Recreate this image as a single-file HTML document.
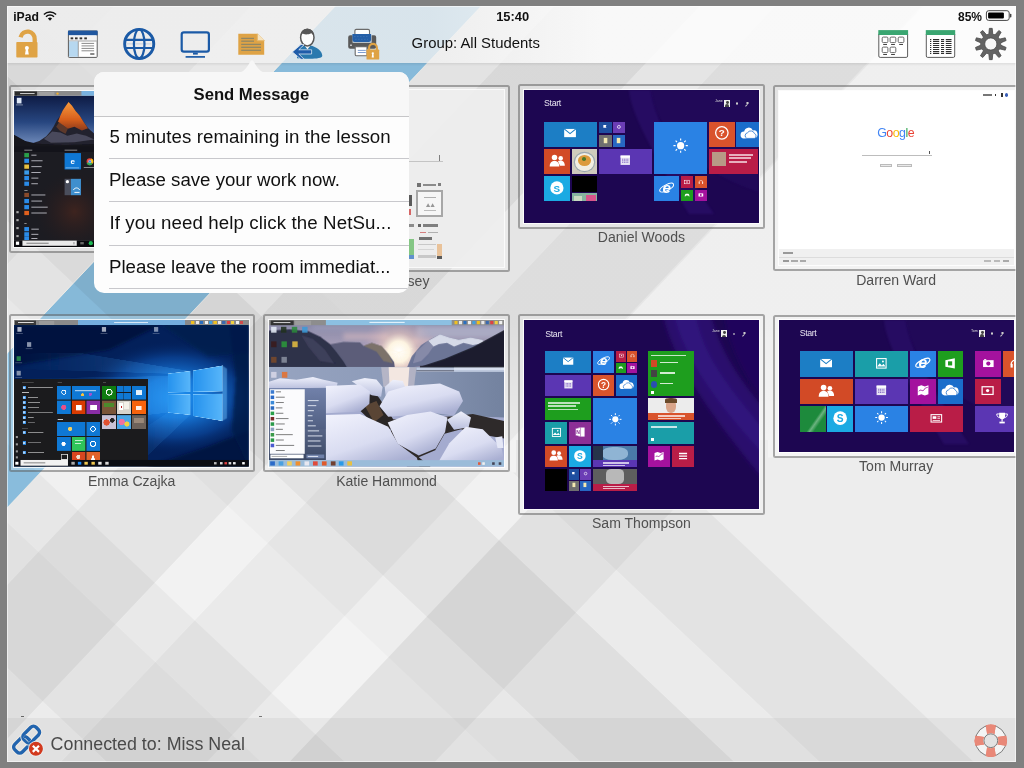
<!DOCTYPE html><html><head><meta charset="utf-8"><title>Send Message</title><style>
*{box-sizing:border-box}
html,body{margin:0;padding:0}
body{width:1024px;height:768px;overflow:hidden;background:#808080;font-family:"Liberation Sans",sans-serif;position:relative}
#scr{position:absolute;left:7px;top:6px;width:1008.5px;height:755.5px;overflow:hidden;background:#e4e4e4}
#in{position:absolute;left:-7px;top:-6px;width:1024px;height:768px;will-change:transform}
.abs{position:absolute}
.t{position:absolute;white-space:nowrap;line-height:1}
.fr{position:absolute;border:2px solid rgba(96,96,96,.52);border-radius:2.5px;background:rgba(255,255,255,.2);background-clip:padding-box}
.im{position:absolute;left:3.75px;top:3.75px;right:3.75px;bottom:3.75px;overflow:hidden;outline:1px solid rgba(255,255,255,.8)}

.lb{position:absolute;white-space:nowrap;font-size:14.05px;color:#505050;line-height:16px;text-align:center}
.tl{position:absolute}
</style></head><body>
<div id="scr"><div id="in">
<svg style="position:absolute;left:0;top:0" width="1024" height="768" viewBox="0 0 1024 768">
<rect width="1024" height="768" fill="#f3f3f3"/>
<polygon points="-200.0,0.0 120.0,0.0 -605.8,768.0 -925.8,768.0" fill="rgba(0,0,0,0.099)"/>
<polygon points="120.0,0.0 257.0,0.0 -468.8,768.0 -605.8,768.0" fill="rgba(0,0,0,0.074)"/>
<polygon points="257.0,0.0 341.0,0.0 -384.8,768.0 -468.8,768.0" fill="rgba(0,0,0,0.045)"/>
<polygon points="487.0,0.0 560.0,0.0 -165.8,768.0 -238.8,768.0" fill="rgba(0,0,0,0.012)"/>
<polygon points="560.0,0.0 705.5,0.0 -20.3,768.0 -165.8,768.0" fill="rgba(0,0,0,0.053)"/>
<polygon points="705.5,0.0 781.0,0.0 55.2,768.0 -20.3,768.0" fill="rgba(0,0,0,0.004)"/>
<polygon points="781.0,0.0 927.0,0.0 201.2,768.0 55.2,768.0" fill="rgba(0,0,0,0.037)"/>
<clipPath id="lowc"><polygon points="0,472.5 516,472.5 516,440 768,440 768,457.6 1024,457.6 1024,768 0,768"/></clipPath>
<g clip-path="url(#lowc)"><polygon points="1009.5,0.0 1155.0,0.0 429.2,768.0 283.7,768.0" fill="rgba(0,0,0,0.062)"/><polygon points="1155.0,0.0 2000.0,0.0 1274.2,768.0 429.2,768.0" fill="rgba(0,0,0,0.025)"/><polygon points="12.0,0.0 166.0,0.0 980.1,768.0 826.1,768.0" fill="rgba(0,0,0,0.041)"/></g>
<linearGradient id="upg" x1="0" y1="0" x2="0" y2="1"><stop offset="0" stop-color="#000" stop-opacity=".055"/><stop offset=".72" stop-color="#000" stop-opacity=".055"/><stop offset="1" stop-color="#000" stop-opacity="0"/></linearGradient>
<linearGradient id="upg2" x1="0" y1="0" x2="0" y2="1"><stop offset="0" stop-color="#000" stop-opacity=".016"/><stop offset=".72" stop-color="#000" stop-opacity=".016"/><stop offset="1" stop-color="#000" stop-opacity="0"/></linearGradient>
<polygon points="487.0,0.0 929.0,0.0 503.8,450.0 61.8,450.0" fill="url(#upg)"/>
<polygon points="929.0,0.0 2000.0,0.0 1574.8,450.0 503.8,450.0" fill="url(#upg2)"/>
<polygon points="-1200.0,0.0 -700.8,0.0 113.3,768.0 -385.9,768.0" fill="rgba(0,0,0,0.025)"/>
<polygon points="-700.8,0.0 -546.5,0.0 267.6,768.0 113.3,768.0" fill="rgba(0,0,0,0.058)"/>
<polygon points="-546.5,0.0 -463.0,0.0 351.1,768.0 267.6,768.0" fill="rgba(0,0,0,0.037)"/>
<polygon points="-308.5,0.0 -227.0,0.0 587.1,768.0 505.6,768.0" fill="rgba(0,0,0,0.021)"/>
<polygon points="-227.0,0.0 -73.5,0.0 740.6,768.0 587.1,768.0" fill="rgba(0,0,0,0.058)"/>
<polygon points="-73.5,0.0 12.0,0.0 826.1,768.0 740.6,768.0" fill="rgba(0,0,0,0.008)"/>
<clipPath id="bsc"><polygon points="341.0,0.0 487.0,0.0 -238.8,768.0 -384.8,768.0"/></clipPath>
<g clip-path="url(#bsc)"><rect width="1024" height="768" fill="#8ec3e4"/>
<polygon points="-546.5,0.0 -463.0,0.0 351.1,768.0 267.6,768.0" fill="rgba(0,0,0,0.030)"/>
<polygon points="-308.5,0.0 -227.0,0.0 587.1,768.0 505.6,768.0" fill="rgba(0,0,0,0.050)"/>
<polygon points="-227.0,0.0 -73.5,0.0 740.6,768.0 587.1,768.0" fill="rgba(0,0,0,0.100)"/>
<polygon points="-73.5,0.0 12.0,0.0 826.1,768.0 740.6,768.0" fill="rgba(0,0,0,0.035)"/>
<polygon points="12.0,0.0 166.0,0.0 980.1,768.0 826.1,768.0" fill="rgba(0,0,0,0.075)"/>
<polygon points="166.0,0.0 1200.0,0.0 2014.1,768.0 980.1,768.0" fill="rgba(0,0,0,0.045)"/>
</g>
<path d="M341 0L-384.8 768" stroke="#fff4e8" stroke-width="1" opacity=".75"/>
<path d="M487 0L-238.8 768" stroke="#fff4e8" stroke-width="1" opacity=".55"/>
</svg>
<div class="fr" style="left:8.6px;top:85.0px;width:246.2px;height:168.0px"><div class="im"><svg style="position:absolute;left:0;top:0" width="234.7" height="156.5" viewBox="42 45 1002.2 668.3" preserveAspectRatio="none"><defs><linearGradient id="ms" x1="0" y1="0" x2="0" y2="1"><stop offset="0" stop-color="#0e1b44"/><stop offset=".5" stop-color="#274680"/><stop offset="1" stop-color="#7d97c4"/></linearGradient><linearGradient id="mo" x1="0" y1="0" x2="0" y2="1"><stop offset="0" stop-color="#f79a3c"/><stop offset=".6" stop-color="#d8601e"/><stop offset="1" stop-color="#8a3a1c"/></linearGradient><radialGradient id="mg" cx="300" cy="560" r="170" gradientUnits="userSpaceOnUse"><stop offset="0" stop-color="#5a2a1c" stop-opacity=".55"/><stop offset="1" stop-color="#2a1a1a" stop-opacity="0"/></radialGradient><filter id="mb"><feGaussianBlur stdDeviation="2.5"/></filter></defs><rect x="42" y="65" width="1002.17" height="225" fill="url(#ms)" /><g filter="url(#mb)"><polygon points="100,274 150,258 180,238 200,215 212,195 225,170 240,150 250,128 262,110 275,92 290,108 305,130 322,150 340,178 360,205 390,232 440,262 440,300 100,300" fill="#23222e" /><polygon points="275,92 290,108 305,130 322,150 340,178 358,204 332,214 300,198 272,206 250,190 230,176 240,150 250,128 262,110" fill="url(#mo)" /><polygon points="236,176 250,190 272,206 262,228 238,215 222,198" fill="#8a4a2a" opacity=".55"/><polygon points="170,250 205,218 240,222 270,236 310,226 350,236 385,252 300,264 200,266" fill="#6d6f88" opacity=".5"/><polygon points="42,232 90,258 140,270 260,276 440,270 440,305 42,305" fill="#13131b" /></g><rect x="42" y="282" width="1002.17" height="400" fill="#14141a" opacity=".96"/><rect x="42" y="282" width="1002.17" height="400" fill="url(#mg)" /><rect x="86" y="296" width="34" height="3" fill="#bbb" /><rect x="258" y="296" width="54" height="3" fill="#bbb" /><rect x="86" y="468" width="14" height="3" fill="#bbb" /><rect x="86" y="610" width="10" height="3" fill="#bbb" /><rect x="86" y="310" width="20" height="18" fill="#2aa04a" /><rect x="116" y="317" width="22" height="4" fill="#d0d0d8" opacity=".85"/><rect x="86" y="334" width="20" height="18" fill="#2a8be8" /><rect x="116" y="341" width="48" height="4" fill="#d0d0d8" opacity=".85"/><rect x="86" y="359" width="20" height="18" fill="#e8c040" /><rect x="116" y="366" width="44" height="4" fill="#d0d0d8" opacity=".85"/><rect x="86" y="384" width="20" height="18" fill="#3a9ae8" /><rect x="116" y="391" width="40" height="4" fill="#d0d0d8" opacity=".85"/><rect x="86" y="408" width="20" height="18" fill="#2a8be8" /><rect x="116" y="415" width="30" height="4" fill="#d0d0d8" opacity=".85"/><rect x="86" y="432" width="20" height="18" fill="#2a8be8" /><rect x="116" y="439" width="28" height="4" fill="#d0d0d8" opacity=".85"/><rect x="86" y="480" width="20" height="18" fill="#8a4a2a" /><rect x="116" y="487" width="60" height="4" fill="#d0d0d8" opacity=".85"/><rect x="86" y="506" width="20" height="18" fill="#2a8be8" /><rect x="116" y="513" width="46" height="4" fill="#d0d0d8" opacity=".85"/><rect x="86" y="532" width="20" height="18" fill="#2a8be8" /><rect x="116" y="539" width="70" height="4" fill="#d0d0d8" opacity=".85"/><rect x="86" y="557" width="20" height="18" fill="#e0601e" /><rect x="116" y="564" width="66" height="4" fill="#d0d0d8" opacity=".85"/><rect x="86" y="626" width="20" height="18" fill="#2a8be8" /><rect x="116" y="633" width="32" height="4" fill="#d0d0d8" opacity=".85"/><rect x="86" y="648" width="20" height="18" fill="#2a8be8" /><rect x="116" y="655" width="30" height="4" fill="#d0d0d8" opacity=".85"/><rect x="86" y="666" width="20" height="18" fill="#2a8be8" /><rect x="116" y="673" width="26" height="4" fill="#d0d0d8" opacity=".85"/><rect x="52" y="558" width="10" height="9" fill="#aaa" /><rect x="52" y="592" width="10" height="9" fill="#aaa" /><rect x="52" y="626" width="10" height="9" fill="#aaa" /><rect x="52" y="660" width="10" height="9" fill="#aaa" /><rect x="258" y="310" width="70" height="70" fill="#0f78d4" /><text x="293" y="358" font-size="34" font-weight="bold" fill="#fff" text-anchor="middle" font-family="Liberation Sans,sans-serif">e</text><rect x="262" y="372" width="58" height="3" fill="#cfe6fb" opacity=".8"/><circle cx="366" cy="346" r="14" fill="#e8443a"/><path d="M366 346 L352 354 A14 14 0 0 0 378 355Z" fill="#34a853"/><path d="M366 346 L378 355 A14 14 0 0 0 372 333Z" fill="#fbbc05"/><circle cx="366" cy="346" r="6" fill="#4285f4" stroke="#fff" stroke-width="1.6"/><rect x="340" y="370" width="45" height="3" fill="#bbb" /><rect x="258" y="420" width="27" height="70" fill="#4a4e5c" /><rect x="285" y="420" width="43" height="70" fill="#3f8fce" /><circle cx="270" cy="432" r="7" fill="#fff"/><path d="M295 468c8-12 20-12 28 0M300 478h22" stroke="#fff" stroke-width="4" fill="none"/><rect x="42" y="682" width="1002.17" height="30" fill="#08080c" /><rect x="78" y="684" width="232" height="22" fill="#e9e9e9" /><rect x="95" y="693" width="95" height="4" fill="#777" /><rect x="50" y="688" width="14" height="14" fill="#fff" /><rect x="296" y="690" width="4" height="10" fill="#888" /><circle cx="370" cy="695" r="9" fill="#1db954"/><rect x="325" y="690" width="15" height="10" fill="#666" /><rect x="42" y="45" width="1002.17" height="20" fill="#8b8b8b" /><rect x="330" y="45" width="714.169" height="20" fill="#79b2e0" /><rect x="46" y="47" width="94" height="18" fill="#2c2c2c" /><rect x="68" y="54" width="62" height="4" fill="#ddd" /><rect x="146" y="49" width="69" height="16" fill="#a0a0a0" /><circle cx="228" cy="56" r="5" fill="#f0b030"/><rect x="54" y="74" width="20" height="24" fill="#dfe8f6" /><rect x="50" y="103" width="30" height="3" fill="#cfd6e4" opacity=".8"/></svg></div></div>
<div class="lb" style="left:8.6px;top:253.3px;width:246.2px">Ben Carter</div>
<div class="fr" style="left:263.3px;top:84.6px;width:246.5px;height:187.7px"><div class="im"><div style="position:absolute;inset:0;background:rgba(238,238,238,.93)"></div><div style="position:absolute;inset:0;opacity:.72"><div class="tl" style="left:31.0px;top:70.8px;width:143.0px;height:0.9px;background:#b5b5b5;"></div><div class="tl" style="left:170.0px;top:64.7px;width:1.0px;height:5.5px;background:#555;"></div><div class="tl" style="left:148.0px;top:92.7px;width:4.0px;height:3.5px;background:#444;"></div><div class="tl" style="left:154.0px;top:93.2px;width:13.0px;height:2.3px;background:#666;"></div><div class="tl" style="left:168.5px;top:92.7px;width:3.5px;height:3.0px;background:#555;"></div><div class="tl" style="left:146.8px;top:99.4px;width:27.2px;height:27.2px;background:#fafafa;border:2.2px solid #8d8d8d"><div class="tl" style="left:6px;top:5px;width:12px;height:1.2px;background:#999"></div><div class="tl" style="left:8px;top:10.5px;width:9px;height:5px;background:#777;clip-path:polygon(0 100%,25% 20%,50% 100%,75% 20%,100% 100%)"></div><div class="tl" style="left:6px;top:18px;width:12px;height:1px;background:#aaa"></div></div><div class="tl" style="left:139.0px;top:104.2px;width:4.0px;height:11.0px;background:#222;"></div><div class="tl" style="left:139.0px;top:118.2px;width:3.0px;height:6.0px;background:#c33;"></div><div class="tl" style="left:140.0px;top:133.7px;width:5.0px;height:2.5px;background:#666;"></div><div class="tl" style="left:149.0px;top:133.2px;width:3.0px;height:3.5px;background:#333;"></div><div class="tl" style="left:154.0px;top:133.7px;width:15.0px;height:2.5px;background:#555;"></div><div class="tl" style="left:151.0px;top:141.2px;width:6.0px;height:1.2px;background:#c55;"></div><div class="tl" style="left:159.0px;top:141.2px;width:10.0px;height:1.2px;background:#999;"></div><div class="tl" style="left:150.0px;top:146.2px;width:13.0px;height:3.5px;background:#444;"></div><div class="tl" style="left:139.0px;top:148.2px;width:6.0px;height:20.0px;background:#5cb85c;"></div><div class="tl" style="left:139.0px;top:164.2px;width:6.0px;height:4.0px;background:#2a6fc0;"></div><div class="tl" style="left:149.0px;top:153.2px;width:18.0px;height:1.0px;background:#bbb;"></div><div class="tl" style="left:149.0px;top:158.2px;width:16.0px;height:1.0px;background:#ccc;"></div><div class="tl" style="left:149.0px;top:164.2px;width:18.0px;height:3.5px;background:#bbb;"></div><div class="tl" style="left:167.5px;top:153.2px;width:5.5px;height:14.0px;background:#e8b27a;"></div><div class="tl" style="left:168.0px;top:165.2px;width:5.0px;height:3.0px;background:#222;"></div></div></div></div>
<div class="lb" style="left:260.1px;top:272.6px;width:246.5px">Chloe Ramsey</div>
<div class="fr" style="left:518.2px;top:84.4px;width:246.5px;height:144.4px"><div class="im"><div style="position:absolute;inset:0;background:#1d0651"></div><svg style="position:absolute;left:0;top:0" width="234.1" height="130.6" viewBox="0 0 234.1 130.6"><defs><filter id="sb1" x="-20%" y="-20%" width="140%" height="140%"><feGaussianBlur stdDeviation="1.2"/></filter></defs><g filter="url(#sb1)" fill="#34167c" opacity=".4"><path d="M105.0 0 C107.0 23.5 127.0 58.8 165.0 124.1 L190.0 124.1 C150.0 65.3 130.0 26.1 127.0 0Z"/></g><g filter="url(#sb1)" fill="#260c62" opacity=".45"><path d="M127.0 0 C133.0 39.2 165.0 78.4 234.1 101.9 L234.1 0.0 L234.1 0Z"/></g></svg><div class="t" style="left:20.1px;top:9.1px;font-size:8.8px;color:#e8e4f0;letter-spacing:-.35px">Start</div><div class="t" style="left:184.8px;top:9.9px;font-size:3.6px;color:#ddd;width:14px;text-align:right">Jane</div><div class="tl" style="left:200.3px;top:9.9px;width:6px;height:6.5px;background:#f0f0f0"><div class="tl" style="left:1.6px;top:1px;width:2.8px;height:2.8px;border-radius:50%;background:#444"></div><div class="tl" style="left:.8px;top:4.2px;width:4.4px;height:2.3px;border-radius:2px 2px 0 0;background:#444"></div></div><div class="tl" style="left:211.8px;top:12.2px;width:2.4px;height:2.4px;border-radius:50%;border:.7px solid #ccc"></div><div class="tl" style="left:222.3px;top:11.4px;width:2.6px;height:2.6px;border-radius:50%;border:.7px solid #ccc"></div><div class="tl" style="left:220.6px;top:14.4px;width:2.5px;height:.8px;background:#ccc;transform:rotate(-45deg)"></div><div class="tl" style="left:20.1px;top:31.4px;width:52.8px;height:25.3px;background:#1c7ec5"><svg style="position:absolute;left:19.4px;top:4.5px" width="14.1" height="14.1" viewBox="0 0 24 24"><rect x="2" y="5" width="20" height="14" fill="#fff"/><path d="M2 5l10 8 10-8" stroke="#1c7ec5" stroke-width="1.8" fill="none"/></svg></div><div class="tl" style="left:74.7px;top:31.4px;width:12.9px;height:11.6px;background:#1e4fa0"><svg style="position:absolute;left:3.3px;top:2.1px" width="6.4" height="6.4" viewBox="0 0 24 24"><path d="M5 4h12l-3 5 3 5H5z" fill="#fff"/></svg></div><div class="tl" style="left:88.9px;top:31.4px;width:12.1px;height:11.6px;background:#6b3db5"><svg style="position:absolute;left:3.2px;top:2.4px" width="5.8" height="5.8" viewBox="0 0 24 24"><circle cx="12" cy="12" r="6" fill="none" stroke="#fff" stroke-width="3"/></svg></div><div class="tl" style="left:74.7px;top:44.8px;width:12.9px;height:11.9px;background:#6f6f6f"><svg style="position:absolute;left:2.9px;top:1.9px" width="7.1" height="7.1" viewBox="0 0 24 24"><rect x="6" y="3" width="12" height="18" fill="#f4e9b0"/></svg></div><div class="tl" style="left:88.9px;top:44.8px;width:12.1px;height:11.9px;background:#2767c2"><svg style="position:absolute;left:2.5px;top:1.9px" width="7.1" height="7.1" viewBox="0 0 24 24"><rect x="6" y="3" width="12" height="18" fill="#f4e9b0"/></svg></div><div class="tl" style="left:20.1px;top:58.8px;width:25.5px;height:25.0px;background:#d24a26"><svg style="position:absolute;left:4.5px;top:3.3px" width="16.5" height="16.5" viewBox="0 0 24 24"><circle cx="8" cy="8" r="4" fill="#fff"/><path d="M1 21c0-6 3-8 7-8s7 2 7 8z" fill="#fff"/><circle cx="17" cy="9" r="3.3" fill="#fff"/><path d="M13 13c5-2 10 0 10 7h-7z" fill="#fff"/></svg></div><div class="tl" style="left:47.7px;top:58.8px;width:25.3px;height:25.0px;background:#cfcbbd"><div class="tl" style="left:12%;top:18%;width:76%;height:70%;border-radius:50%;background:#f1ede2;box-shadow:0 0 0 1.2px #9aa7b0"></div><div class="tl" style="left:24%;top:26%;width:52%;height:42%;border-radius:50%;background:#dc9a3c"></div><div class="tl" style="left:42%;top:34%;width:16%;height:14%;border-radius:50%;background:#4c7a2a"></div></div><div class="tl" style="left:74.7px;top:58.8px;width:53.4px;height:25.0px;background:#5b36b3"><svg style="position:absolute;left:20.4px;top:5.3px" width="12.5" height="12.5" viewBox="0 0 24 24"><rect x="3" y="3" width="18" height="18" fill="#e8e4f4"/><rect x="3" y="3" width="18" height="4" fill="#fff"/><path d="M6 10h12M6 13h12M6 16h12" stroke="#5b36b3" stroke-width="1.4" stroke-dasharray="2 1.3"/></svg></div><div class="tl" style="left:20.1px;top:86.1px;width:25.5px;height:24.7px;background:#1baae3"><svg style="position:absolute;left:4.8px;top:3.5px" width="15.8" height="15.8" viewBox="0 0 24 24"><circle cx="12" cy="12" r="10" fill="#fff"/><text x="12" y="17.5" font-size="15" font-weight="bold" text-anchor="middle" fill="#1baae3" font-family="Liberation Sans,sans-serif">S</text></svg></div><div class="tl" style="left:47.7px;top:86.1px;width:25.3px;height:15.7px;background:#000"></div><div class="tl" style="left:47.7px;top:102.8px;width:25.3px;height:8.0px;background:#86b39e"><div class="tl" style="left:55%;top:20%;width:40%;height:80%;background:#d8538a"></div><div class="tl" style="left:10%;top:40%;width:30%;height:60%;background:#c8d8c0"></div></div><div class="tl" style="left:130.2px;top:31.4px;width:52.8px;height:52.3px;background:#2a82e4"><svg style="position:absolute;left:17.8px;top:15.4px" width="17.3" height="17.3" viewBox="0 0 24 24"><circle cx="12" cy="12" r="5" fill="#fff"/><g stroke="#fff" stroke-width="1.6"><path d="M12 2v3M12 19v3M2 12h3M19 12h3M5 5l2 2M17 17l2 2M5 19l2-2M17 7l2-2"/></g></svg></div><div class="tl" style="left:185.1px;top:31.4px;width:25.5px;height:25.3px;background:#d9532c"><svg style="position:absolute;left:4.9px;top:3.8px" width="15.7" height="15.7" viewBox="0 0 24 24"><circle cx="12" cy="12" r="9.5" fill="none" stroke="#fff" stroke-width="2"/><text x="12" y="17.5" font-size="15" font-weight="bold" text-anchor="middle" fill="#fff" font-family="Liberation Sans,sans-serif">?</text></svg></div><div class="tl" style="left:212.4px;top:31.4px;width:25.3px;height:25.3px;background:#1a6dcb"><svg style="position:absolute;left:3.5px;top:2.5px" width="18.2" height="18.2" viewBox="0 0 24 24"><path d="M5 19a4.5 4.5 0 0 1 .5-9 6 6 0 0 1 11.5-1.5 5 5 0 0 1 2 10z" fill="#fff"/><path d="M9 19a4 4 0 0 1 1-7.5 5 5 0 0 1 9 1 3.5 3.5 0 0 1 0 6.5z" fill="#fff" stroke="#1a6dcb" stroke-width="1"/></svg></div><div class="tl" style="left:185.1px;top:58.8px;width:49.0px;height:25.0px;background:#b91d47"><div class="tl" style="left:7%;top:12%;width:27%;height:56%;background:#b89a86"></div><div class="tl" style="left:40%;top:20%;width:50%;height:1.6px;background:rgba(255,255,255,.65)"></div><div class="tl" style="left:40%;top:34%;width:46%;height:1.6px;background:rgba(255,255,255,.65)"></div><div class="tl" style="left:40%;top:48%;width:38%;height:1.6px;background:rgba(255,255,255,.65)"></div></div><div class="tl" style="left:130.2px;top:86.1px;width:25.3px;height:24.7px;background:#2a82e4"><svg style="position:absolute;left:5.0px;top:3.7px" width="15.3" height="15.3" viewBox="0 0 24 24"><text x="12" y="20" font-size="24" font-weight="bold" font-style="italic" text-anchor="middle" fill="#fff" font-family="Liberation Sans,sans-serif">e</text><ellipse cx="12" cy="12" rx="12" ry="4.5" transform="rotate(-28 12 12)" fill="none" stroke="#fff" stroke-width="1.6"/></svg></div><div class="tl" style="left:157.2px;top:86.1px;width:12.1px;height:11.6px;background:#b91d47"><svg style="position:absolute;left:3.0px;top:2.3px" width="6.0" height="6.0" viewBox="0 0 24 24"><rect x="2" y="5" width="20" height="14" fill="none" stroke="#fff" stroke-width="2.2"/><circle cx="12" cy="12" r="3" fill="#fff"/></svg></div><div class="tl" style="left:171.2px;top:86.1px;width:11.9px;height:11.6px;background:#d9532c"><svg style="position:absolute;left:3.0px;top:2.4px" width="5.8" height="5.8" viewBox="0 0 24 24"><path d="M4 14a8 8 0 0 1 16 0" stroke="#fff" stroke-width="2.2" fill="none"/><rect x="3" y="13" width="4" height="7" fill="#fff"/><rect x="17" y="13" width="4" height="7" fill="#fff"/></svg></div><div class="tl" style="left:157.2px;top:99.5px;width:12.1px;height:11.3px;background:#1e9e1e"><svg style="position:absolute;left:2.9px;top:2.1px" width="6.2" height="6.2" viewBox="0 0 24 24"><path d="M3 17c0-6 2-10 5-10h8c3 0 5 4 5 10-2 2-4-1-5-3H8c-1 2-3 5-5 3z" fill="#fff"/></svg></div><div class="tl" style="left:171.2px;top:99.5px;width:11.9px;height:11.3px;background:#a4129e"><svg style="position:absolute;left:3.1px;top:2.4px" width="5.7" height="5.7" viewBox="0 0 24 24"><rect x="2" y="6" width="20" height="13" fill="#fff"/><circle cx="12" cy="12.5" r="4" fill="#a4129e"/><rect x="4" y="4" width="4" height="2" fill="#fff"/></svg></div></div></div>
<div class="lb" style="left:518.2px;top:229.1px;width:246.5px">Daniel Woods</div>
<div class="fr" style="left:772.9px;top:85.2px;width:246.5px;height:186.0px"><div class="im"><div style="position:absolute;inset:0;background:#fff"></div><div class="t" style="left:92.0px;top:36.2px;width:50px;text-align:center;font-size:12.4px;letter-spacing:-.5px"><span style="color:#4285f4">G</span><span style="color:#ea4335">o</span><span style="color:#fbbc05">o</span><span style="color:#4285f4">g</span><span style="color:#34a853">l</span><span style="color:#ea4335">e</span></div><div class="tl" style="left:83.1px;top:64.2px;width:70.0px;height:0.8px;background:#bdbdbd;"></div><div class="tl" style="left:149.9px;top:60.0px;width:0.8px;height:3.5px;background:#555;"></div><div class="tl" style="left:101.1px;top:73.0px;width:12.1px;height:3.4px;background:#e9e9e9;border:.5px solid #bbb"></div><div class="tl" style="left:118.4px;top:73.0px;width:15.0px;height:3.4px;background:#e9e9e9;border:.5px solid #bbb"></div><div class="tl" style="left:0.0px;top:157.6px;width:237.0px;height:18.9px;background:#f0f0f0;"></div><div class="tl" style="left:0.0px;top:166.0px;width:237.0px;height:0.6px;background:#dcdcdc;"></div><div class="tl" style="left:4.5px;top:161.5px;width:9.5px;height:1.1px;background:#999;"></div><div class="tl" style="left:4.5px;top:169.5px;width:5.5px;height:1.1px;background:#999;"></div><div class="tl" style="left:12.0px;top:169.5px;width:7.0px;height:1.1px;background:#aaa;"></div><div class="tl" style="left:21.0px;top:169.5px;width:6.0px;height:1.1px;background:#aaa;"></div><div class="tl" style="left:205.0px;top:169.5px;width:7.0px;height:1.1px;background:#bbb;"></div><div class="tl" style="left:215.0px;top:169.5px;width:6.0px;height:1.1px;background:#bbb;"></div><div class="tl" style="left:224.0px;top:169.5px;width:6.0px;height:1.1px;background:#aaa;"></div><div class="tl" style="left:204.0px;top:3.5px;width:9.0px;height:1.5px;background:#777;"></div><div class="tl" style="left:216.0px;top:3.0px;width:1.6px;height:2.0px;background:#333;"></div><div class="tl" style="left:222.5px;top:2.5px;width:1.5px;height:3.5px;background:#333;"></div><div class="tl" style="left:226.0px;top:2.0px;width:3.5px;height:4.0px;background:#3a5fb8;border-radius:50%"></div></div></div>
<div class="lb" style="left:772.9px;top:271.5px;width:246.5px">Darren Ward</div>
<div class="fr" style="left:8.6px;top:314.3px;width:246.2px;height:158.0px"><div class="im"><svg style="position:absolute;left:0;top:0" width="234.7" height="146.5" viewBox="55 75 900 562" preserveAspectRatio="none"><defs><radialGradient id="eg1"><stop offset="0" stop-color="#1e90f0"/><stop offset=".35" stop-color="#1677d8"/><stop offset=".7" stop-color="#0b469a" stop-opacity=".75"/><stop offset="1" stop-color="#03205a" stop-opacity="0"/></radialGradient><linearGradient id="eg3" x1="0" y1="0" x2="1" y2="0"><stop offset="0" stop-color="#2592ee"/><stop offset="1" stop-color="#58b6fa"/></linearGradient><linearGradient id="eg2" x1="0" y1="0" x2="1" y2="0"><stop offset="0" stop-color="#2f8fe6" stop-opacity="0"/><stop offset="1" stop-color="#4fb2ff" stop-opacity=".55"/></linearGradient><filter id="eb" x="-10%" y="-10%" width="120%" height="120%"><feGaussianBlur stdDeviation="7"/></filter><filter id="eb2"><feGaussianBlur stdDeviation="2.2"/></filter></defs><rect x="55" y="75" width="900" height="562" fill="#03205a" /><ellipse cx="670" cy="372" rx="360" ry="220" fill="url(#eg1)"/><g filter="url(#eb)"><polygon points="55,93 620,93 420,190 55,250" fill="#02143a" opacity=".8"/><polygon points="560,640 955,640 955,500 800,560" fill="#021539" opacity=".7"/><polygon points="880,93 955,93 955,637 890,500 905,300" fill="#021a48" opacity=".75"/><polygon points="620,93 955,93 955,200 800,215" fill="#021a48" opacity=".6"/></g><g filter="url(#eb2)"><polygon points="645,281 730,271 300,200 55,205 55,262" fill="url(#eg2)" opacity=".5"/><polygon points="645,290 645,430 55,500 55,300" fill="url(#eg2)" opacity=".42"/><polygon points="645,430 730,440 520,640 330,640" fill="url(#eg2)" opacity=".32"/></g><polygon points="645.7,281 730.5,271 730.5,350.5 645.7,352.8" fill="url(#eg3)" stroke="#a4dcff" stroke-width="2" stroke-opacity=".75"/><polygon points="742,269.6 853.8,250.3 853.8,348.2 742,350.5" fill="url(#eg3)" stroke="#a4dcff" stroke-width="2" stroke-opacity=".75"/><polygon points="645.7,362 730.5,360.5 730.5,439 645.7,430" fill="url(#eg3)" stroke="#a4dcff" stroke-width="2" stroke-opacity=".75"/><polygon points="742,360.5 853.8,358.2 853.8,462.2 742,443" fill="url(#eg3)" stroke="#a4dcff" stroke-width="2" stroke-opacity=".75"/><g filter="url(#eb2)"><polygon points="853.8,250 853.8,462 872,452 872,262" fill="#6cc0ff" opacity=".45"/></g><rect x="55" y="75" width="900" height="18" fill="#8a8a8a" /><rect x="300" y="75" width="410" height="18" fill="#74aede" /><rect x="60" y="77" width="80" height="16" fill="#3a3a3a" /><rect x="70" y="83" width="60" height="3" fill="#ddd" /><rect x="150" y="78" width="60" height="15" fill="#9a9a9a" /><rect x="440" y="82" width="130" height="3.5" fill="#e8f2fb" opacity=".9"/><rect x="735" y="78" width="12" height="12" fill="#f0c020" /><rect x="752" y="78" width="12" height="12" fill="#e8e8e8" /><rect x="769" y="78" width="12" height="12" fill="#2a6fc0" /><rect x="786" y="78" width="12" height="12" fill="#f0f0f0" /><rect x="803" y="78" width="12" height="12" fill="#40a0e0" /><rect x="820" y="78" width="12" height="12" fill="#f0c020" /><rect x="837" y="78" width="12" height="12" fill="#e8e8e8" /><rect x="854" y="78" width="12" height="12" fill="#3a6ab0" /><rect x="871" y="78" width="12" height="12" fill="#e04040" /><rect x="888" y="78" width="12" height="12" fill="#f0d040" /><rect x="905" y="78" width="12" height="12" fill="#f0f0f0" /><rect x="922" y="78" width="12" height="12" fill="#d04a4a" /><rect x="68" y="102" width="16" height="18" fill="#e8eef8" opacity=".75"/><rect x="63" y="126" width="26" height="2.5" fill="#cfd6e4" opacity=".45"/><rect x="392" y="102" width="16" height="18" fill="#d8dde8" opacity=".75"/><rect x="387" y="126" width="26" height="2.5" fill="#cfd6e4" opacity=".45"/><rect x="592" y="102" width="16" height="18" fill="#aab8d0" opacity=".75"/><rect x="587" y="126" width="26" height="2.5" fill="#cfd6e4" opacity=".45"/><rect x="105" y="160" width="16" height="18" fill="#b8c0d0" opacity=".75"/><rect x="100" y="184" width="26" height="2.5" fill="#cfd6e4" opacity=".45"/><rect x="65" y="214" width="16" height="18" fill="#2fa84f" opacity=".75"/><rect x="60" y="238" width="26" height="2.5" fill="#cfd6e4" opacity=".45"/><rect x="65" y="270" width="16" height="18" fill="#b0b8c8" opacity=".75"/><rect x="60" y="294" width="26" height="2.5" fill="#cfd6e4" opacity=".45"/><rect x="55" y="302" width="513" height="310" fill="#1b1b1d" /><rect x="220" y="328" width="52" height="52" fill="#0f78d4" /><rect x="276" y="328" width="109" height="52" fill="#0f78d4" /><rect x="220" y="384" width="52" height="53" fill="#0f78d4" /><rect x="276" y="384" width="53" height="53" fill="#d83b01" /><rect x="333" y="384" width="52" height="53" fill="#8a2da5" /><rect x="220" y="467" width="109" height="53" fill="#0f78d4" /><rect x="333" y="467" width="52" height="53" fill="#0f78d4" /><rect x="220" y="524" width="52" height="52" fill="#0f78d4" /><rect x="276" y="524" width="53" height="52" fill="#2fc45a" /><rect x="333" y="524" width="52" height="52" fill="#0f78d4" /><rect x="276" y="580" width="53" height="32" fill="#d8461f" /><rect x="333" y="580" width="52" height="32" fill="#e2622a" /><rect x="393" y="328" width="53" height="52" fill="#107c10" /><rect x="507" y="328" width="53" height="52" fill="#0f78d4" /><rect x="393" y="384" width="53" height="53" fill="#7a5638" /><rect x="450" y="384" width="53" height="53" fill="#d8d4cc" /><rect x="507" y="384" width="53" height="53" fill="#f7630c" /><rect x="393" y="441" width="53" height="52" fill="#c9c3d6" /><rect x="450" y="441" width="53" height="52" fill="#4aa6e6" /><rect x="507" y="441" width="53" height="52" fill="#6d625a" /><rect x="450" y="328" width="25" height="24" fill="#0f78d4" /><rect x="478" y="328" width="25" height="24" fill="#0f78d4" /><rect x="450" y="356" width="25" height="24" fill="#0f78d4" /><rect x="478" y="356" width="25" height="24" fill="#0f78d4" /><circle cx="246" cy="410" r="10" fill="#e8508a"/><circle cx="246" cy="352" r="8" fill="none" stroke="#fff" stroke-width="3"/><rect x="292" y="400" width="22" height="22" fill="#fff" /><rect x="348" y="402" width="24" height="18" fill="#fff" /><circle cx="420" cy="352" r="11" fill="none" stroke="#fff" stroke-width="4"/><rect x="522" y="345" width="24" height="18" fill="#fff" opacity=".9"/><rect x="524" y="404" width="20" height="16" fill="#fff" opacity=".9"/><circle cx="270" cy="493" r="8" fill="#f4d060"/><circle cx="358" cy="493" r="9" fill="none" stroke="#fff" stroke-width="3.5"/><circle cx="245" cy="550" r="8" fill="#fff"/><circle cx="358" cy="550" r="10" fill="none" stroke="#fff" stroke-width="4"/><rect x="288" y="536" width="30" height="4" fill="#fff" opacity=".7"/><rect x="288" y="546" width="24" height="4" fill="#fff" opacity=".7"/><rect x="290" y="345" width="80" height="4" fill="#cfe6fb" opacity=".8"/><circle cx="318" cy="362" r="6" fill="#f4c040"/><circle cx="348" cy="360" r="6" fill="#a050d0"/><rect x="400" y="392" width="40" height="18" fill="#4c8a2c" /><rect x="458" y="392" width="16" height="28" fill="#fff" /><rect x="478" y="390" width="18" height="28" fill="#f4f0e8" /><rect x="464" y="404" width="6" height="8" fill="#c02020" /><circle cx="410" cy="468" r="12" fill="#e05030"/><circle cx="432" cy="460" r="9" fill="#222"/><circle cx="468" cy="466" r="12" fill="#f070a0"/><circle cx="488" cy="474" r="10" fill="#f0d040"/><rect x="515" y="450" width="37" height="20" fill="#9a8878" /><rect x="236" y="590" width="24" height="20" fill="none" stroke="#ddd" stroke-width="3"/><circle cx="302" cy="600" r="8" fill="#f0e0d0"/><path d="M350 612l8-22 8 22z" fill="#fff"/><rect x="222" y="315" width="18" height="3" fill="#ccc" /><rect x="395" y="315" width="13" height="3" fill="#ccc" /><rect x="222" y="455" width="20" height="3" fill="#ccc" /><rect x="86" y="315" width="44" height="3" fill="#bbb" /><rect x="86" y="352" width="26" height="3" fill="#bbb" /><rect x="86" y="488" width="22" height="3" fill="#bbb" /><rect x="88" y="328" width="13" height="13" fill="#2a8be8" /><rect x="90.5" y="330.5" width="8" height="8" fill="#d6e9fb" opacity=".8"/><rect x="108" y="332.5" width="95" height="3" fill="#d8d8d8" opacity=".62"/><rect x="88" y="366" width="13" height="13" fill="#2a8be8" /><rect x="90.5" y="368.5" width="8" height="8" fill="#d6e9fb" opacity=".8"/><rect x="108" y="370.5" width="40" height="3" fill="#d8d8d8" opacity=".62"/><rect x="88" y="385" width="13" height="13" fill="#2a8be8" /><rect x="90.5" y="387.5" width="8" height="8" fill="#d6e9fb" opacity=".8"/><rect x="108" y="389.5" width="48" height="3" fill="#d8d8d8" opacity=".62"/><rect x="88" y="404" width="13" height="13" fill="#2a8be8" /><rect x="90.5" y="406.5" width="8" height="8" fill="#d6e9fb" opacity=".8"/><rect x="108" y="408.5" width="42" height="3" fill="#d8d8d8" opacity=".62"/><rect x="88" y="423" width="13" height="13" fill="#2a8be8" /><rect x="90.5" y="425.5" width="8" height="8" fill="#d6e9fb" opacity=".8"/><rect x="108" y="427.5" width="95" height="3" fill="#d8d8d8" opacity=".62"/><rect x="88" y="443" width="13" height="13" fill="#2a8be8" /><rect x="90.5" y="445.5" width="8" height="8" fill="#d6e9fb" opacity=".8"/><rect x="108" y="447.5" width="22" height="3" fill="#d8d8d8" opacity=".62"/><rect x="88" y="461" width="13" height="13" fill="#2a8be8" /><rect x="90.5" y="463.5" width="8" height="8" fill="#d6e9fb" opacity=".8"/><rect x="108" y="465.5" width="26" height="3" fill="#d8d8d8" opacity=".62"/><rect x="88" y="500" width="13" height="13" fill="#2a8be8" /><rect x="90.5" y="502.5" width="8" height="8" fill="#d6e9fb" opacity=".8"/><rect x="108" y="504.5" width="60" height="3" fill="#d8d8d8" opacity=".62"/><rect x="88" y="540" width="13" height="13" fill="#2a8be8" /><rect x="90.5" y="542.5" width="8" height="8" fill="#d6e9fb" opacity=".8"/><rect x="108" y="544.5" width="50" height="3" fill="#d8d8d8" opacity=".62"/><rect x="88" y="577" width="13" height="13" fill="#2a8be8" /><rect x="90.5" y="579.5" width="8" height="8" fill="#d6e9fb" opacity=".8"/><rect x="108" y="581.5" width="62" height="3" fill="#d8d8d8" opacity=".62"/><rect x="62" y="520" width="8" height="8" fill="#999" /><rect x="62" y="548" width="8" height="8" fill="#999" /><rect x="62" y="575" width="8" height="8" fill="#999" /><rect x="62" y="598" width="8" height="8" fill="#999" /><rect x="55" y="612" width="900" height="25" fill="#0a0c12" /><rect x="80" y="612" width="182" height="22" fill="#f2f2f2" /><rect x="92" y="621" width="83" height="4" fill="#888" /><rect x="60" y="619" width="12" height="11" fill="#fff" /><rect x="275" y="619" width="13" height="11" fill="#aaa" /><rect x="300" y="619" width="13" height="11" fill="#1a8cff" /><rect x="325" y="619" width="13" height="11" fill="#f0c850" /><rect x="352" y="619" width="13" height="11" fill="#f0c850" /><rect x="378" y="619" width="13" height="11" fill="#e8e8e8" /><rect x="405" y="619" width="13" height="11" fill="#d8d8d8" /><rect x="822" y="620" width="10" height="9" fill="#bbb" /><rect x="845" y="620" width="10" height="9" fill="#ddd" /><rect x="862" y="620" width="10" height="9" fill="#e04040" /><rect x="878" y="620" width="10" height="9" fill="#ddd" /><rect x="895" y="620" width="10" height="9" fill="#eee" /><rect x="930" y="620" width="10" height="9" fill="#fff" /></svg></div></div>
<div class="lb" style="left:8.6px;top:472.6px;width:246.2px">Emma Czajka</div>
<div class="fr" style="left:263.3px;top:314.3px;width:246.5px;height:158.0px"><div class="im"><svg style="position:absolute;left:0;top:0" width="235.0" height="146.5" viewBox="13 15 999.5 624" preserveAspectRatio="none"><defs><linearGradient id="ks" x1="0" y1="0" x2="0" y2="1"><stop offset="0" stop-color="#8586a6"/><stop offset=".5" stop-color="#a49cb6"/><stop offset="1" stop-color="#c4b2c0"/></linearGradient><radialGradient id="ksun" cx="565" cy="150" r="160" gradientUnits="userSpaceOnUse"><stop offset="0" stop-color="#ffffff"/><stop offset=".28" stop-color="#fff6e2" stop-opacity=".98"/><stop offset=".5" stop-color="#f0ccc0" stop-opacity=".55"/><stop offset="1" stop-color="#c8a8b8" stop-opacity="0"/></radialGradient><linearGradient id="kw" x1="0" y1="0" x2="1" y2="0"><stop offset="0" stop-color="#97a4c0"/><stop offset=".5" stop-color="#8d9bb9"/><stop offset="1" stop-color="#73829f"/></linearGradient><linearGradient id="ki" x1="0" y1="0" x2="0" y2="1"><stop offset="0" stop-color="#eef0fb"/><stop offset="1" stop-color="#b9bfdd"/></linearGradient><linearGradient id="ki2" x1="0" y1="0" x2=".6" y2="1"><stop offset="0" stop-color="#f2f3fd"/><stop offset=".6" stop-color="#d9dcf1"/><stop offset="1" stop-color="#a9afd2"/></linearGradient><linearGradient id="km" x1="0" y1="0" x2="0" y2="1"><stop offset="0" stop-color="#6e7ea8" stop-opacity=".92"/><stop offset="1" stop-color="#33405e" stop-opacity=".95"/></linearGradient><filter id="kb"><feGaussianBlur stdDeviation="1.8"/></filter><filter id="kb2"><feGaussianBlur stdDeviation="10"/></filter><filter id="kb3"><feGaussianBlur stdDeviation="1.2"/></filter></defs><rect x="13" y="15" width="1000" height="210" fill="url(#ks)" /><g filter="url(#kb2)" opacity=".7"><rect x="330" y="70" width="190" height="30" fill="#c8b0bc" /><rect x="640" y="40" width="373" height="50" fill="#b4b6cc" /><rect x="200" y="40" width="320" height="20" fill="#9c9cb8" /><rect x="620" y="95" width="140" height="20" fill="#d4bcc4" /></g><rect x="13" y="15" width="1000" height="285" fill="url(#ksun)" /><g stroke="#fff6e0" stroke-width="2.2" opacity=".75" filter="url(#kb3)"><path d="M565 152L630.778 175.941"/><path d="M565 152L608.841 195.841"/><path d="M565 152L583.811 203.683"/><path d="M565 152L546.189 203.683"/><path d="M565 152L521.159 195.841"/><path d="M565 152L499.222 175.942"/><path d="M565 152L622.956 136.471"/><path d="M565 152L507.044 136.471"/></g><g filter="url(#kb3)"><polygon points="600,218 620,170 660,122 700,96 740,76 780,90 820,100 870,90 920,100 935,114 880,145 800,175 700,210" fill="#6c7496" /><polygon points="690,104 740,76 780,90 820,100 870,90 920,100 932,112 880,122 840,112 800,128 770,112 735,118 712,128" fill="#d6dae8" /><polygon points="640,150 690,104 712,128 690,160 660,190 625,200" fill="#8d90ac" opacity=".8"/><polygon points="265,120 330,108 400,110 415,125 450,112 492,126 522,162 545,195 548,218 290,218" fill="#5b5d79" /><polygon points="415,125 450,112 492,126 522,162 540,200 500,190 470,150" fill="#857a66" opacity=".75"/><polygon points="13,60 100,55 180,62 230,86 270,116 300,152 330,192 345,218 13,218" fill="#2d3049" /><polygon points="150,80 200,95 250,140 290,200 230,190 180,130" fill="#474a66" opacity=".6"/><polygon points="655,214 760,180 880,130 1013,58 1013,218" fill="#1d1f2e" /></g><rect x="13" y="215" width="1000" height="265" fill="url(#kw)" /><g filter="url(#kb)"><polygon points="522,216 610,216 604,300 526,304" fill="#fff6ea" opacity="1"/><polygon points="490,216 640,216 630,300 500,300" fill="#e4d4d8" opacity=".45"/></g><rect x="640" y="217" width="373" height="19" fill="#c9d4e8" opacity=".85"/><rect x="800" y="214" width="213" height="14" fill="#dfe6f4" opacity=".8"/><rect x="655" y="210" width="358" height="7" fill="#23242f" opacity=".85"/><rect x="640" y="228" width="160" height="6" fill="#3a3c4c" opacity=".55"/><g filter="url(#kb)"><polygon points="255,400 1013,430 1013,639 255,639" fill="#a4abcf" /><polygon points="395,335 470,330 530,420 560,470 520,480 440,440 400,400" fill="#2b2726" /><polygon points="520,440 800,425 880,415 1013,445 1013,520 900,500 830,480 760,500 720,570 650,600 700,639 600,639 545,545" fill="#2f2a29" /><polygon points="420,380 470,360 500,420 460,450" fill="#7a5a40" opacity=".6"/></g><g filter="url(#kb)"><polygon points="13,278 60,263 130,270 200,258 245,270 305,282 300,302 13,308" fill="url(#ki)" /><polygon points="365,276 420,262 470,268 496,300 490,342 450,336 400,300" fill="url(#ki)" /><polygon points="505,300 540,270 582,275 592,300 560,332 510,346" fill="url(#ki)" /><polygon points="255,296 400,290 442,320 440,372 400,406 255,412" fill="url(#ki2)" /><polygon points="483,382 520,320 600,296 740,285 822,320 838,360 800,422 700,410 600,422 520,427" fill="url(#ki2)" /><polygon points="518,452 600,420 700,405 772,430 762,492 722,562 650,592 560,542" fill="url(#ki2)" /><polygon points="770,440 830,404 872,430 862,472 800,482" fill="url(#ki)" /><polygon points="738,612 780,540 850,470 922,480 1002,560 1013,612 1013,639 738,639" fill="url(#ki2)" /><polygon points="255,420 400,415 520,470 562,542 642,602 652,639 255,639" fill="url(#ki2)" /><polygon points="975,515 1005,510 1010,560 985,560" fill="#e4e7f6" /></g><rect x="13" y="305" width="242" height="307" fill="url(#km)" /><rect x="17" y="310" width="148" height="275" fill="#fbfbfd" /><rect x="20" y="314" width="15" height="15" fill="#3a7ad0" /><rect x="42" y="319" width="22" height="4" fill="#555" opacity=".8"/><rect x="20" y="336.8" width="15" height="15" fill="#2a6ac8" /><rect x="42" y="341.8" width="38" height="4" fill="#555" opacity=".8"/><rect x="20" y="359.6" width="15" height="15" fill="#3a8ad8" /><rect x="42" y="364.6" width="34" height="4" fill="#555" opacity=".8"/><rect x="20" y="382.4" width="15" height="15" fill="#2a6ac0" /><rect x="42" y="387.4" width="28" height="4" fill="#555" opacity=".8"/><rect x="20" y="405.2" width="15" height="15" fill="#2aa04a" /><rect x="42" y="410.2" width="32" height="4" fill="#555" opacity=".8"/><rect x="20" y="428" width="15" height="15" fill="#7a2a2a" /><rect x="42" y="433" width="54" height="4" fill="#555" opacity=".8"/><rect x="20" y="450.8" width="15" height="15" fill="#2a9a4a" /><rect x="42" y="455.8" width="38" height="4" fill="#555" opacity=".8"/><rect x="20" y="473.6" width="15" height="15" fill="#8aa0c0" /><rect x="42" y="478.6" width="30" height="4" fill="#555" opacity=".8"/><rect x="20" y="496.4" width="15" height="15" fill="#3a9a4a" /><rect x="42" y="501.4" width="72" height="4" fill="#555" opacity=".8"/><rect x="20" y="519.2" width="15" height="15" fill="#2a9a4a" /><rect x="42" y="524.2" width="34" height="4" fill="#555" opacity=".8"/><rect x="20" y="542" width="15" height="15" fill="#4a5ad0" /><rect x="42" y="547" width="78" height="4" fill="#555" opacity=".8"/><rect x="42" y="569" width="38" height="4" fill="#555" opacity=".8"/><rect x="19" y="588" width="141" height="16" fill="#fff" /><rect x="24" y="594" width="66" height="4" fill="#aaa" /><rect x="178" y="356" width="46" height="4.5" fill="#e6ebf6" opacity=".85"/><rect x="178" y="377.5" width="36" height="4.5" fill="#e6ebf6" opacity=".85"/><rect x="178" y="399" width="26" height="4.5" fill="#e6ebf6" opacity=".85"/><rect x="178" y="420.5" width="20" height="4.5" fill="#e6ebf6" opacity=".85"/><rect x="178" y="442" width="22" height="4.5" fill="#e6ebf6" opacity=".85"/><rect x="178" y="463.5" width="34" height="4.5" fill="#e6ebf6" opacity=".85"/><rect x="178" y="485" width="48" height="4.5" fill="#e6ebf6" opacity=".85"/><rect x="178" y="506.5" width="62" height="4.5" fill="#e6ebf6" opacity=".85"/><rect x="178" y="528" width="54" height="4.5" fill="#e6ebf6" opacity=".85"/><rect x="178" y="549.5" width="58" height="4.5" fill="#e6ebf6" opacity=".85"/><rect x="172" y="588" width="76" height="16" fill="#6f80a8" /><rect x="178" y="594" width="44" height="4" fill="#e6ebf6" /><rect x="13" y="612" width="1000" height="27" fill="#9bbcd9" /><rect x="18" y="617" width="20" height="18" fill="#2a6ac8" /><rect x="54" y="617" width="20" height="18" fill="#4aa0e0" /><rect x="90" y="617" width="20" height="18" fill="#f0d060" /><rect x="126" y="617" width="20" height="18" fill="#f09030" /><rect x="164" y="617" width="20" height="18" fill="#e8e8f0" /><rect x="200" y="617" width="20" height="18" fill="#e04a3a" /><rect x="238" y="617" width="20" height="18" fill="#e05a2a" /><rect x="276" y="617" width="20" height="18" fill="#704030" /><rect x="310" y="617" width="20" height="18" fill="#2a9ae8" /><rect x="346" y="617" width="20" height="18" fill="#e8c040" /><rect x="902" y="621" width="11" height="11" fill="#e05a3a" /><rect x="920" y="621" width="11" height="11" fill="#f0f0f0" /><rect x="962" y="621" width="11" height="11" fill="#445" /><rect x="990" y="621" width="11" height="11" fill="#445" /><rect x="13" y="15" width="1000" height="22" fill="#8d8d8d" /><rect x="255" y="15" width="535" height="22" fill="#8cc0e2" /><rect x="20" y="17" width="98" height="20" fill="#333" /><rect x="32" y="24" width="72" height="4" fill="#ddd" /><rect x="124" y="18" width="68" height="19" fill="#9c9c9c" /><rect x="440" y="23" width="150" height="4.5" fill="#f0f8ff" opacity=".9"/><rect x="802" y="19" width="13" height="14" fill="#f0c020" /><rect x="821" y="19" width="13" height="14" fill="#e8e8e8" /><rect x="840" y="19" width="13" height="14" fill="#2a6fc0" /><rect x="859" y="19" width="13" height="14" fill="#f0f0f0" /><rect x="878" y="19" width="13" height="14" fill="#40a0e0" /><rect x="897" y="19" width="13" height="14" fill="#f0c020" /><rect x="916" y="19" width="13" height="14" fill="#e8e8e8" /><rect x="935" y="19" width="13" height="14" fill="#3a6ab0" /><rect x="954" y="19" width="13" height="14" fill="#e04040" /><rect x="973" y="19" width="13" height="14" fill="#f0d040" /><rect x="992" y="19" width="13" height="14" fill="#f0f0f0" /><rect x="22" y="44" width="23" height="25" fill="#e8eef8" opacity=".85"/><rect x="64" y="44" width="23" height="25" fill="#20301c" opacity=".85"/><rect x="110" y="44" width="23" height="25" fill="#2a8a3a" opacity=".85"/><rect x="154" y="44" width="23" height="25" fill="#3a9ad8" opacity=".85"/><rect x="22" y="106" width="23" height="25" fill="#3a1a1a" opacity=".85"/><rect x="66" y="106" width="23" height="25" fill="#2a9a3a" opacity=".85"/><rect x="112" y="106" width="23" height="25" fill="#e8c040" opacity=".85"/><rect x="22" y="172" width="23" height="25" fill="#7a4a2a" opacity=".85"/><rect x="66" y="172" width="23" height="25" fill="#8a90a0" opacity=".85"/><rect x="22" y="236" width="23" height="25" fill="#d8d8e8" opacity=".85"/><rect x="68" y="236" width="23" height="25" fill="#e8702a" opacity=".85"/></svg></div></div>
<div class="lb" style="left:263.3px;top:472.6px;width:246.5px">Katie Hammond</div>
<div class="fr" style="left:518.2px;top:314.0px;width:246.5px;height:201.0px"><div class="im"><div style="position:absolute;inset:0;background:#1d0651"></div><svg style="position:absolute;left:0;top:0" width="235" height="188" viewBox="0 0 235 188"><defs><filter id="sbs" x="-20%" y="-20%" width="140%" height="140%"><feGaussianBlur stdDeviation="2.2"/></filter></defs><g filter="url(#sbs)"><path d="M139 -4C150 40 178 85 240 160L240 88C215 60 196 30 187 -4Z" fill="#35178a" opacity=".5"/><path d="M150 -4C162 40 190 80 240 135L240 110C212 75 180 40 172 -4Z" fill="#3f1d98" opacity=".35"/><path d="M200 -4C206 30 222 60 240 80L240 -4Z" fill="#260c66" opacity=".5"/></g></svg><div class="t" style="left:21.3px;top:9.8px;font-size:8.8px;color:#e8e4f0;letter-spacing:-.35px">Start</div><div class="t" style="left:181.8px;top:10.6px;font-size:3.6px;color:#ddd;width:14px;text-align:right">Jane</div><div class="tl" style="left:197.2px;top:10.6px;width:6px;height:6.5px;background:#f0f0f0"><div class="tl" style="left:1.6px;top:1px;width:2.8px;height:2.8px;border-radius:50%;background:#444"></div><div class="tl" style="left:.8px;top:4.2px;width:4.4px;height:2.3px;border-radius:2px 2px 0 0;background:#444"></div></div><div class="tl" style="left:208.8px;top:12.9px;width:2.4px;height:2.4px;border-radius:50%;border:.7px solid #ccc"></div><div class="tl" style="left:219.2px;top:12.1px;width:2.6px;height:2.6px;border-radius:50%;border:.7px solid #ccc"></div><div class="tl" style="left:217.6px;top:15.1px;width:2.5px;height:.8px;background:#ccc;transform:rotate(-45deg)"></div><div class="tl" style="left:21.3px;top:31.2px;width:45.3px;height:21.9px;background:#1c7ec5"><svg style="position:absolute;left:16.5px;top:3.9px" width="12.3" height="12.3" viewBox="0 0 24 24"><rect x="2" y="5" width="20" height="14" fill="#fff"/><path d="M2 5l10 8 10-8" stroke="#1c7ec5" stroke-width="1.8" fill="none"/></svg></div><div class="tl" style="left:68.8px;top:31.2px;width:21.2px;height:21.9px;background:#2a82e4"><svg style="position:absolute;left:4.0px;top:3.5px" width="13.2" height="13.2" viewBox="0 0 24 24"><text x="12" y="20" font-size="24" font-weight="bold" font-style="italic" text-anchor="middle" fill="#fff" font-family="Liberation Sans,sans-serif">e</text><ellipse cx="12" cy="12" rx="12" ry="4.5" transform="rotate(-28 12 12)" fill="none" stroke="#fff" stroke-width="1.6"/></svg></div><div class="tl" style="left:92.2px;top:31.2px;width:10.0px;height:10.6px;background:#b91d47"><svg style="position:absolute;left:2.4px;top:2.3px" width="5.2" height="5.2" viewBox="0 0 24 24"><rect x="2" y="5" width="20" height="14" fill="none" stroke="#fff" stroke-width="2.2"/><circle cx="12" cy="12" r="3" fill="#fff"/></svg></div><div class="tl" style="left:103.5px;top:31.2px;width:10.0px;height:10.6px;background:#d9532c"><svg style="position:absolute;left:2.5px;top:2.4px" width="5.0" height="5.0" viewBox="0 0 24 24"><path d="M4 14a8 8 0 0 1 16 0" stroke="#fff" stroke-width="2.2" fill="none"/><rect x="3" y="13" width="4" height="7" fill="#fff"/><rect x="17" y="13" width="4" height="7" fill="#fff"/></svg></div><div class="tl" style="left:92.2px;top:43.1px;width:10.0px;height:10.0px;background:#1e9e1e"><svg style="position:absolute;left:2.2px;top:1.8px" width="5.5" height="5.5" viewBox="0 0 24 24"><path d="M3 17c0-6 2-10 5-10h8c3 0 5 4 5 10-2 2-4-1-5-3H8c-1 2-3 5-5 3z" fill="#fff"/></svg></div><div class="tl" style="left:103.5px;top:43.1px;width:10.0px;height:10.0px;background:#a4129e"><svg style="position:absolute;left:2.5px;top:2.1px" width="5.0" height="5.0" viewBox="0 0 24 24"><rect x="2" y="6" width="20" height="13" fill="#fff"/><circle cx="12" cy="12.5" r="4" fill="#a4129e"/><rect x="4" y="4" width="4" height="2" fill="#fff"/></svg></div><div class="tl" style="left:21.3px;top:55.0px;width:45.3px;height:21.6px;background:#5b36b3"><svg style="position:absolute;left:17.3px;top:4.5px" width="10.8" height="10.8" viewBox="0 0 24 24"><rect x="3" y="3" width="18" height="18" fill="#e8e4f4"/><rect x="3" y="3" width="18" height="4" fill="#fff"/><path d="M6 10h12M6 13h12M6 16h12" stroke="#5b36b3" stroke-width="1.4" stroke-dasharray="2 1.3"/></svg></div><div class="tl" style="left:68.8px;top:55.0px;width:21.2px;height:21.6px;background:#d9532c"><svg style="position:absolute;left:4.0px;top:3.3px" width="13.2" height="13.2" viewBox="0 0 24 24"><circle cx="12" cy="12" r="9.5" fill="none" stroke="#fff" stroke-width="2"/><text x="12" y="17.5" font-size="15" font-weight="bold" text-anchor="middle" fill="#fff" font-family="Liberation Sans,sans-serif">?</text></svg></div><div class="tl" style="left:92.2px;top:55.0px;width:21.2px;height:21.6px;background:#1a6dcb"><svg style="position:absolute;left:3.0px;top:2.3px" width="15.3" height="15.3" viewBox="0 0 24 24"><path d="M5 19a4.5 4.5 0 0 1 .5-9 6 6 0 0 1 11.5-1.5 5 5 0 0 1 2 10z" fill="#fff"/><path d="M9 19a4 4 0 0 1 1-7.5 5 5 0 0 1 9 1 3.5 3.5 0 0 1 0 6.5z" fill="#fff" stroke="#1a6dcb" stroke-width="1"/></svg></div><div class="tl" style="left:21.3px;top:78.7px;width:45.3px;height:21.9px;background:#1e9e1e"><div class="tl" style="left:6%;top:18%;width:70%;height:1.3px;background:rgba(255,255,255,.7)"></div><div class="tl" style="left:6%;top:32%;width:62%;height:1.3px;background:rgba(255,255,255,.7)"></div><div class="tl" style="left:6%;top:46%;width:66%;height:1.3px;background:rgba(255,255,255,.7)"></div></div><div class="tl" style="left:68.8px;top:78.7px;width:44.7px;height:45.3px;background:#2a82e4"><svg style="position:absolute;left:15.0px;top:13.5px" width="14.7" height="14.7" viewBox="0 0 24 24"><circle cx="12" cy="12" r="5" fill="#fff"/><g stroke="#fff" stroke-width="1.6"><path d="M12 2v3M12 19v3M2 12h3M19 12h3M5 5l2 2M17 17l2 2M5 19l2-2M17 7l2-2"/></g></svg></div><div class="tl" style="left:21.3px;top:102.5px;width:21.9px;height:21.6px;background:#1a9ea8"><svg style="position:absolute;left:5.5px;top:4.5px" width="10.8" height="10.8" viewBox="0 0 24 24"><rect x="3" y="3" width="18" height="18" fill="none" stroke="#fff" stroke-width="2"/><path d="M4 18l5-6 4 4 3-3 4 5z" fill="#fff"/><circle cx="15" cy="8.5" r="1.8" fill="#fff"/></svg></div><div class="tl" style="left:45.1px;top:102.5px;width:21.6px;height:21.6px;background:#8c2f96"><svg style="position:absolute;left:4.7px;top:3.9px" width="12.1" height="12.1" viewBox="0 0 24 24"><rect x="9" y="3" width="12" height="18" fill="#fff"/><path d="M3 5l10-2v18l-10-2z" fill="#fff" stroke="#8c2f96" stroke-width="1"/><text x="8" y="16" font-size="10" font-weight="bold" text-anchor="middle" fill="#8c2f96" font-family="Liberation Sans,sans-serif">N</text></svg></div><div class="tl" style="left:21.3px;top:125.9px;width:21.9px;height:21.6px;background:#d24a26"><svg style="position:absolute;left:3.8px;top:2.8px" width="14.2" height="14.2" viewBox="0 0 24 24"><circle cx="8" cy="8" r="4" fill="#fff"/><path d="M1 21c0-6 3-8 7-8s7 2 7 8z" fill="#fff"/><circle cx="17" cy="9" r="3.3" fill="#fff"/><path d="M13 13c5-2 10 0 10 7h-7z" fill="#fff"/></svg></div><div class="tl" style="left:45.1px;top:125.9px;width:21.6px;height:21.6px;background:#1baae3"><svg style="position:absolute;left:3.9px;top:3.0px" width="13.8" height="13.8" viewBox="0 0 24 24"><circle cx="12" cy="12" r="10" fill="#fff"/><text x="12" y="17.5" font-size="15" font-weight="bold" text-anchor="middle" fill="#1baae3" font-family="Liberation Sans,sans-serif">S</text></svg></div><div class="tl" style="left:68.8px;top:125.9px;width:44.7px;height:21.6px;background:#4a7aa8"><div class="tl" style="left:20%;top:5%;width:60%;height:60%;background:#8fb4d4;border-radius:40%"></div><div class="tl" style="left:0;top:0;width:22%;height:68%;background:#26344a"></div><div class="tl" style="left:0;bottom:0;width:100%;height:32%;background:#5b36b3"><div class="tl" style="left:22%;top:28%;width:60%;height:1.3px;background:rgba(255,255,255,.7)"></div><div class="tl" style="left:22%;top:62%;width:50%;height:1.3px;background:rgba(255,255,255,.7)"></div></div></div><div class="tl" style="left:21.3px;top:149.4px;width:21.9px;height:21.6px;background:#000"></div><div class="tl" style="left:45.1px;top:149.4px;width:10.0px;height:10.6px;background:#1e4fa0"><svg style="position:absolute;left:2.2px;top:2.2px" width="5.5" height="5.5" viewBox="0 0 24 24"><path d="M5 4h12l-3 5 3 5H5z" fill="#fff"/></svg></div><div class="tl" style="left:56.3px;top:149.4px;width:10.3px;height:10.6px;background:#6b3db5"><svg style="position:absolute;left:2.6px;top:2.3px" width="5.2" height="5.2" viewBox="0 0 24 24"><circle cx="12" cy="12" r="6" fill="none" stroke="#fff" stroke-width="3"/></svg></div><div class="tl" style="left:45.1px;top:161.2px;width:10.0px;height:9.7px;background:#6f6f6f"><svg style="position:absolute;left:2.1px;top:1.5px" width="5.8" height="5.8" viewBox="0 0 24 24"><rect x="6" y="3" width="12" height="18" fill="#f4e9b0"/></svg></div><div class="tl" style="left:56.3px;top:161.2px;width:10.3px;height:9.7px;background:#2767c2"><svg style="position:absolute;left:2.2px;top:1.5px" width="5.8" height="5.8" viewBox="0 0 24 24"><rect x="6" y="3" width="12" height="18" fill="#f4e9b0"/></svg></div><div class="tl" style="left:68.8px;top:149.4px;width:44.7px;height:21.6px;background:#5e5e5e"><div class="tl" style="left:30%;top:0;width:40%;height:68%;background:#b8b8b8;border-radius:30%"></div><div class="tl" style="left:0;bottom:0;width:100%;height:32%;background:#b91d47"><div class="tl" style="left:22%;top:28%;width:60%;height:1.3px;background:rgba(255,255,255,.7)"></div><div class="tl" style="left:22%;top:62%;width:50%;height:1.3px;background:rgba(255,255,255,.7)"></div></div></div><div class="tl" style="left:124.4px;top:31.2px;width:45.3px;height:45.3px;background:#1e9e1e"><div class="tl" style="left:6%;top:8%;width:78%;height:1.4px;background:rgba(255,255,255,.75)"></div><div class="tl" style="left:6%;top:20%;width:14%;height:15%;background:#d24a26"></div><div class="tl" style="left:26%;top:24%;width:40%;height:1.3px;background:rgba(255,255,255,.8)"></div><div class="tl" style="left:6%;top:43%;width:14%;height:15%;background:#444"></div><div class="tl" style="left:26%;top:47%;width:34%;height:1.3px;background:rgba(255,255,255,.8)"></div><div class="tl" style="left:6%;top:66%;width:14%;height:15%;background:#2a4fb0;border-radius:50%"></div><div class="tl" style="left:26%;top:70%;width:28%;height:1.3px;background:rgba(255,255,255,.8)"></div><div class="tl" style="left:6%;top:88%;width:7%;height:7%;background:#fff"></div></div><div class="tl" style="left:124.4px;top:78.7px;width:45.3px;height:21.9px;background:#ececec"><div class="tl" style="left:38%;top:4%;width:24%;height:62%;background:#d9a58a;border-radius:45%"></div><div class="tl" style="left:36%;top:0;width:28%;height:22%;background:#6a4a2a;border-radius:40% 40% 0 0"></div><div class="tl" style="left:0;bottom:0;width:100%;height:32%;background:#d9532c"><div class="tl" style="left:22%;top:28%;width:60%;height:1.3px;background:rgba(255,255,255,.7)"></div><div class="tl" style="left:22%;top:62%;width:50%;height:1.3px;background:rgba(255,255,255,.7)"></div></div></div><div class="tl" style="left:124.4px;top:102.5px;width:45.3px;height:21.6px;background:#1a9ea8"><div class="tl" style="left:6%;top:18%;width:58%;height:1.4px;background:rgba(255,255,255,.75)"></div><div class="tl" style="left:6%;top:72%;width:7%;height:16%;background:#fff"></div></div><div class="tl" style="left:124.4px;top:125.9px;width:21.6px;height:21.6px;background:#a4129e"><svg style="position:absolute;left:4.7px;top:3.9px" width="12.1" height="12.1" viewBox="0 0 24 24"><path d="M3 6l6-2 6 2 6-2v15l-6 2-6-2-6 2z" fill="#fff"/><path d="M5 14c3-5 6 2 9-3s4-2 6-4" stroke="#a4129e" stroke-width="1.6" fill="none"/></svg></div><div class="tl" style="left:148.2px;top:125.9px;width:21.6px;height:21.6px;background:#b91d47"><svg style="position:absolute;left:4.7px;top:3.9px" width="12.1" height="12.1" viewBox="0 0 24 24"><path d="M4 7h16M4 12h16M4 17h16" stroke="#fff" stroke-width="2.6"/></svg></div></div></div>
<div class="lb" style="left:518.2px;top:515.3px;width:246.5px">Sam Thompson</div>
<div class="fr" style="left:772.9px;top:314.5px;width:246.5px;height:143.0px"><div class="im"><div style="position:absolute;inset:0;background:#1d0651"></div><svg style="position:absolute;left:0;top:0" width="236.0" height="130.7" viewBox="0 0 236.0 130.7"><defs><filter id="sb2" x="-20%" y="-20%" width="140%" height="140%"><feGaussianBlur stdDeviation="1.2"/></filter></defs><g filter="url(#sb2)" fill="#34167c" opacity=".4"><path d="M105.0 0 C107.0 23.5 127.0 58.8 165.0 124.2 L190.0 124.2 C150.0 65.3 130.0 26.1 127.0 0Z"/></g><g filter="url(#sb2)" fill="#260c62" opacity=".45"><path d="M127.0 0 C133.0 39.2 165.0 78.4 236.0 101.9 L236.0 0.0 L236.0 0Z"/></g></svg><div class="t" style="left:21.0px;top:9.1px;font-size:8.8px;color:#e8e4f0;letter-spacing:-.35px">Start</div><div class="t" style="left:185.1px;top:9.9px;font-size:3.6px;color:#ddd;width:14px;text-align:right">Tom</div><div class="tl" style="left:200.6px;top:9.9px;width:6px;height:6.5px;background:#f0f0f0"><div class="tl" style="left:1.6px;top:1px;width:2.8px;height:2.8px;border-radius:50%;background:#444"></div><div class="tl" style="left:.8px;top:4.2px;width:4.4px;height:2.3px;border-radius:2px 2px 0 0;background:#444"></div></div><div class="tl" style="left:212.1px;top:12.2px;width:2.4px;height:2.4px;border-radius:50%;border:.7px solid #ccc"></div><div class="tl" style="left:222.6px;top:11.4px;width:2.6px;height:2.6px;border-radius:50%;border:.7px solid #ccc"></div><div class="tl" style="left:220.9px;top:14.4px;width:2.5px;height:.8px;background:#ccc;transform:rotate(-45deg)"></div><div class="tl" style="left:21.0px;top:31.2px;width:53.3px;height:25.4px;background:#1c7ec5"><svg style="position:absolute;left:19.6px;top:4.6px" width="14.2" height="14.2" viewBox="0 0 24 24"><rect x="2" y="5" width="20" height="14" fill="#fff"/><path d="M2 5l10 8 10-8" stroke="#1c7ec5" stroke-width="1.8" fill="none"/></svg></div><div class="tl" style="left:76.4px;top:31.2px;width:53.3px;height:25.4px;background:#1a9ea8"><svg style="position:absolute;left:20.3px;top:5.3px" width="12.7" height="12.7" viewBox="0 0 24 24"><rect x="3" y="3" width="18" height="18" fill="none" stroke="#fff" stroke-width="2"/><path d="M4 18l5-6 4 4 3-3 4 5z" fill="#fff"/><circle cx="15" cy="8.5" r="1.8" fill="#fff"/></svg></div><div class="tl" style="left:131.5px;top:31.2px;width:25.4px;height:25.4px;background:#2a82e4"><svg style="position:absolute;left:4.8px;top:3.8px" width="15.7" height="15.7" viewBox="0 0 24 24"><text x="12" y="20" font-size="24" font-weight="bold" font-style="italic" text-anchor="middle" fill="#fff" font-family="Liberation Sans,sans-serif">e</text><ellipse cx="12" cy="12" rx="12" ry="4.5" transform="rotate(-28 12 12)" fill="none" stroke="#fff" stroke-width="1.6"/></svg></div><div class="tl" style="left:158.9px;top:31.2px;width:25.6px;height:25.4px;background:#1e9e1e"><svg style="position:absolute;left:5.7px;top:4.6px" width="14.2" height="14.2" viewBox="0 0 24 24"><path d="M4 7l16-3v17l-16-3z" fill="#fff"/><rect x="8.5" y="9" width="7" height="7" fill="#1e9e1e"/></svg></div><div class="tl" style="left:196.5px;top:31.2px;width:25.9px;height:25.4px;background:#a4129e"><svg style="position:absolute;left:6.6px;top:5.3px" width="12.7" height="12.7" viewBox="0 0 24 24"><rect x="2" y="6" width="20" height="13" fill="#fff"/><circle cx="12" cy="12.5" r="4" fill="#a4129e"/><rect x="4" y="4" width="4" height="2" fill="#fff"/></svg></div><div class="tl" style="left:224.2px;top:31.2px;width:25.9px;height:25.4px;background:#d9532c"><svg style="position:absolute;left:6.6px;top:5.3px" width="12.7" height="12.7" viewBox="0 0 24 24"><path d="M4 14a8 8 0 0 1 16 0" stroke="#fff" stroke-width="2.2" fill="none"/><rect x="3" y="13" width="4" height="7" fill="#fff"/><rect x="17" y="13" width="4" height="7" fill="#fff"/></svg></div><div class="tl" style="left:21.0px;top:58.6px;width:53.3px;height:25.4px;background:#d24a26"><svg style="position:absolute;left:18.3px;top:3.3px" width="16.8" height="16.8" viewBox="0 0 24 24"><circle cx="8" cy="8" r="4" fill="#fff"/><path d="M1 21c0-6 3-8 7-8s7 2 7 8z" fill="#fff"/><circle cx="17" cy="9" r="3.3" fill="#fff"/><path d="M13 13c5-2 10 0 10 7h-7z" fill="#fff"/></svg></div><div class="tl" style="left:76.4px;top:58.6px;width:53.3px;height:25.4px;background:#5b36b3"><svg style="position:absolute;left:20.3px;top:5.3px" width="12.7" height="12.7" viewBox="0 0 24 24"><rect x="3" y="3" width="18" height="18" fill="#e8e4f4"/><rect x="3" y="3" width="18" height="4" fill="#fff"/><path d="M6 10h12M6 13h12M6 16h12" stroke="#5b36b3" stroke-width="1.4" stroke-dasharray="2 1.3"/></svg></div><div class="tl" style="left:131.5px;top:58.6px;width:25.4px;height:25.4px;background:#a4129e"><svg style="position:absolute;left:5.6px;top:4.6px" width="14.2" height="14.2" viewBox="0 0 24 24"><path d="M3 6l6-2 6 2 6-2v15l-6 2-6-2-6 2z" fill="#fff"/><path d="M5 14c3-5 6 2 9-3s4-2 6-4" stroke="#a4129e" stroke-width="1.6" fill="none"/></svg></div><div class="tl" style="left:158.9px;top:58.6px;width:25.6px;height:25.4px;background:#1a6dcb"><svg style="position:absolute;left:3.7px;top:2.5px" width="18.3" height="18.3" viewBox="0 0 24 24"><path d="M5 19a4.5 4.5 0 0 1 .5-9 6 6 0 0 1 11.5-1.5 5 5 0 0 1 2 10z" fill="#fff"/><path d="M9 19a4 4 0 0 1 1-7.5 5 5 0 0 1 9 1 3.5 3.5 0 0 1 0 6.5z" fill="#fff" stroke="#1a6dcb" stroke-width="1"/></svg></div><div class="tl" style="left:196.5px;top:58.6px;width:25.9px;height:25.4px;background:#b91d47"><svg style="position:absolute;left:6.3px;top:5.1px" width="13.2" height="13.2" viewBox="0 0 24 24"><rect x="2" y="5" width="20" height="14" fill="none" stroke="#fff" stroke-width="2.2"/><circle cx="12" cy="12" r="3" fill="#fff"/></svg></div><div class="tl" style="left:21.0px;top:86.0px;width:25.9px;height:25.4px;background:#1d8a3c"><div class="tl" style="left:0;top:0;width:100%;height:100%;background:linear-gradient(125deg,rgba(255,255,255,0) 55%,rgba(255,255,255,.35) 62%,rgba(255,255,255,0) 72%)"></div></div><div class="tl" style="left:48.7px;top:86.0px;width:25.6px;height:25.4px;background:#1baae3"><svg style="position:absolute;left:4.7px;top:3.6px" width="16.3" height="16.3" viewBox="0 0 24 24"><circle cx="12" cy="12" r="10" fill="#fff"/><text x="12" y="17.5" font-size="15" font-weight="bold" text-anchor="middle" fill="#1baae3" font-family="Liberation Sans,sans-serif">S</text></svg></div><div class="tl" style="left:76.4px;top:86.0px;width:53.3px;height:25.4px;background:#2a82e4"><svg style="position:absolute;left:19.0px;top:4.1px" width="15.2" height="15.2" viewBox="0 0 24 24"><circle cx="12" cy="12" r="5" fill="#fff"/><g stroke="#fff" stroke-width="1.6"><path d="M12 2v3M12 19v3M2 12h3M19 12h3M5 5l2 2M17 17l2 2M5 19l2-2M17 7l2-2"/></g></svg></div><div class="tl" style="left:131.5px;top:86.0px;width:53.1px;height:25.4px;background:#b91d47"><svg style="position:absolute;left:20.2px;top:5.3px" width="12.7" height="12.7" viewBox="0 0 24 24"><rect x="2" y="5" width="20" height="14" fill="none" stroke="#fff" stroke-width="2"/><rect x="5" y="8" width="7" height="5" fill="#fff"/><path d="M14 9h5M14 12h5M5 16h14" stroke="#fff" stroke-width="1.5"/></svg></div><div class="tl" style="left:196.5px;top:86.0px;width:53.6px;height:25.4px;background:#5b36b3"><svg style="position:absolute;left:19.7px;top:4.6px" width="14.2" height="14.2" viewBox="0 0 24 24"><path d="M7 3h10v6a5 5 0 0 1-10 0z" fill="#fff"/><path d="M7 5H3c0 4 2 6 5 6M17 5h4c0 4-2 6-5 6" stroke="#fff" stroke-width="1.6" fill="none"/><rect x="11" y="13" width="2" height="5" fill="#fff"/><rect x="7.5" y="18" width="9" height="3" fill="#fff"/></svg></div></div></div>
<div class="lb" style="left:772.9px;top:457.8px;width:246.5px">Tom Murray</div>
<div class="abs" style="left:0;top:0;width:1024px;height:63px;background:linear-gradient(90deg,rgba(241,241,241,.77) 0,rgba(241,241,241,.77) 430px,rgba(255,255,255,.82) 600px);box-shadow:0 1px 2.5px rgba(0,0,0,.1)"></div>
<svg class="abs" style="left:0px;top:0px;overflow:visible" width="64" height="32" viewBox="0 0 64 32"><g fill="none" stroke="#111" stroke-width="1.450"><path d="M43.900 14.500a8.650 8.650 0 0 1 12.200 0"/><path d="M46 16.700a5.700 5.700 0 0 1 8 0"/></g><path d="M47.950 18.600a2.900 2.900 0 0 1 4.100 0l-2.050 2.100z" fill="#111"/></svg>
<svg class="abs" style="left:0px;top:0px;overflow:visible" width="1024" height="32" viewBox="0 0 1024 32"><rect x="986.400" y="10.700" width="22.800" height="9.700" rx="2.300" fill="#fff" fill-opacity=".6" stroke="#444" stroke-width="1"/><rect x="988.100" y="12.500" width="15.800" height="6.100" rx="1" fill="#000"/><rect x="1009.900" y="13.700" width="1.500" height="3.700" rx=".700" fill="#444"/></svg>
<svg class="abs" style="left:0px;top:0px;overflow:visible" width="64" height="64" viewBox="0 0 64 64"><path d="M20.6 37.2 A7.15 7.15 0 0 1 34.7 39.4 L34.7 43" fill="none" stroke="#dfa345" stroke-width="4.3"/><rect x="16.3" y="42" width="21.2" height="15.6" rx=".8" fill="#dfa345"/><circle cx="26.9" cy="48.1" r="2" fill="#fff"/><path d="M25.9 49l-.9 5.6h3.8l-.9-5.6z" fill="#fff"/></svg>
<svg class="abs" style="left:0px;top:0px;overflow:visible" width="128" height="64" viewBox="0 0 128 64"><rect x="68.4" y="31" width="28.8" height="26.4" rx=".8" fill="#fff" stroke="#5a5a5a" stroke-width="1"/><rect x="68" y="30.6" width="29.6" height="4.6" fill="#20579f"/><rect x="69" y="36" width="27.6" height="4.6" fill="#f3f3f3"/><path d="M69 41h27.6" stroke="#8a8a8a" stroke-width=".8"/><rect x="70.6" y="37.4" width="2.6" height="1.9" fill="#333"/><rect x="75" y="37.4" width="2.6" height="1.9" fill="#333"/><rect x="79.6" y="37.4" width="2.6" height="1.9" fill="#333"/><rect x="84.3" y="37.4" width="2.6" height="1.9" fill="#333"/><rect x="69" y="41.4" width="9" height="15.4" fill="#b7d8f0"/><path d="M78.3 41.4v15.4" stroke="#777" stroke-width=".7"/><path d="M81.5 43.4h12.6" stroke="#8a8a8a" stroke-width="1"/><path d="M81.5 45.9h12.6" stroke="#8a8a8a" stroke-width="1"/><path d="M81.5 48.4h12.6" stroke="#8a8a8a" stroke-width="1"/><path d="M81.5 50.8h12.6" stroke="#8a8a8a" stroke-width="1"/><rect x="90.2" y="53" width="4.2" height="2" fill="#888"/></svg>
<svg class="abs" style="left:0px;top:0px;overflow:visible" width="256" height="64" viewBox="0 0 256 64"><circle cx="139.2" cy="43.9" r="14.55" fill="none" stroke="#1b5aa6" stroke-width="2.9"/><ellipse cx="139.2" cy="43.9" rx="5.3" ry="14.4" fill="none" stroke="#1b5aa6" stroke-width="2.2"/><path d="M125.6 39.8h27.2M125.6 48h27.2" stroke="#1b5aa6" stroke-width="2.2"/><path d="M127 43.9h24.4" stroke="#1b5aa6" stroke-width="1" opacity=".18"/></svg>
<svg class="abs" style="left:0px;top:0px;overflow:visible" width="256" height="64" viewBox="0 0 256 64"><rect x="181.7" y="32.3" width="27.2" height="19.4" rx="2.2" fill="none" stroke="#1b5aa6" stroke-width="2.2"/><rect x="193" y="52.6" width="4.8" height="2" fill="#1b5aa6"/><path d="M185.6 56.9h19.4" stroke="#1b5aa6" stroke-width="1.7"/></svg>
<svg class="abs" style="left:0px;top:0px;overflow:visible" width="320" height="64" viewBox="0 0 320 64"><path d="M238.3 33.8h19.5l6.4 6.4v14.6h-25.9z" fill="#dfa345"/><path d="M257.8 33.8v6.4h6.4z" fill="#f6e3bf"/><path d="M257.3 33.8v6.9h6.9" fill="none" stroke="#e9c27e" stroke-width=".8"/><path d="M241.2 38.4h12.8" stroke="#85836a" stroke-width="1.3" opacity=".85"/><path d="M241.2 41.2h12.8" stroke="#85836a" stroke-width="1.3" opacity=".85"/><path d="M241.2 44.4h19.8" stroke="#85836a" stroke-width="1.3" opacity=".85"/><path d="M241.2 47.3h19.8" stroke="#85836a" stroke-width="1.3" opacity=".85"/><path d="M241.2 50.3h19.8" stroke="#85836a" stroke-width="1.3" opacity=".85"/></svg>
<svg class="abs" style="left:0px;top:0px;overflow:visible" width="384" height="64" viewBox="0 0 384 64"><path d="M297 58.3c0-7 3-11.5 7.5-12.8l2.9 2.4 2.9-2.4c6 1.2 12 5.5 12 10.3 0 2.3-5.500 3-12.5 3s-12.800-.5-12.800-.5z" fill="#2a79ae"/><path d="M304.600 45.400l2.900 4 2.900-4z" fill="#f4f4f4"/><ellipse cx="307.3" cy="37.6" rx="6.7" ry="8.3" fill="#fdfdfd" stroke="#575757" stroke-width="1.5"/><path d="M300.700 37c-.6-5.5 2.600-8.200 6.600-8.200s7.300 2.700 6.600 8.200c-.8-2.300-1.700-3.300-2.600-3.800-3 1.600-7.300 1.400-9 .4-.8.800-1.300 1.900-1.600 3.400z" fill="#575757"/><path d="M292.400 51.900l8.600-7.400 3.200 0-5.400 5.300h12.800v4.200h-12.800l5.400 5.300-3.200 0z" fill="#1f5ca9" stroke="#eef3f8" stroke-width=".7"/></svg>
<svg class="abs" style="left:0px;top:0px;overflow:visible" width="448" height="64" viewBox="0 0 448 64"><rect x="354.900" y="29.400" width="14.600" height="7" rx="1.400" fill="#fff" stroke="#6a6a6a" stroke-width="1.100"/><path d="M348.200 37.200a2 2 0 0 1 2-2h2.400v7.600h19v-7.600h2.600a2 2 0 0 1 2 2v9.500a2 2 0 0 1-2 2h-24a2 2 0 0 1-2-2z" fill="#595959"/><path d="M352.400 34h18.700v5.800a2.200 2.200 0 0 1-2.200 2.200h-14.300a2.200 2.200 0 0 1-2.200-2.200z" fill="#2560a8"/><path d="M354.500 36.600h14.500M355.500 39.300h12.500" stroke="#7fa3d0" stroke-width=".6" stroke-dasharray=".8 2.200" opacity=".8"/><rect x="350" y="44.600" width="2" height="1.200" fill="#ddd"/><path d="M355.200 46.600h11.800v9.200h-10.400a1.400 1.400 0 0 1-1.400-1.400z" fill="#fff" stroke="#6a6a6a" stroke-width="1.100"/><path d="M357.800 50.400h8M357.800 52.500h8" stroke="#6f94cc" stroke-width=".9"/><path d="M369.100 50v-2.200a3.900 3.900 0 0 1 7.800 0v2.200" fill="none" stroke="#dfa345" stroke-width="2.100"/><rect x="366.500" y="49.500" width="12.700" height="10.100" rx=".7" fill="#dfa345"/><circle cx="372.800" cy="53.300" r="1.150" fill="#fff"/><path d="M372.200 53.800l-.5 3.600h2.200l-.5-3.600z" fill="#fff"/></svg>
<svg class="abs" style="left:0px;top:0px;overflow:visible" width="1024" height="64" viewBox="0 0 1024 64"><path d="M878.800 34v22a1.400 1.400 0 0 0 1.400 1.400h26a1.400 1.400 0 0 0 1.400-1.400v-22z" fill="#fff" stroke="#5c5c5c" stroke-width="1"/><rect x="878.300" y="30.100" width="29.800" height="4.900" fill="#3aa671"/><rect x="882.2" y="37.1" width="5.700" height="5.500" rx="1.100" fill="#fff" stroke="#686868" stroke-width="1"/><path d="M883.2 44.5h3.800" stroke="#444" stroke-width="1"/><rect x="890.1" y="37.1" width="5.700" height="5.500" rx="1.100" fill="#fff" stroke="#686868" stroke-width="1"/><path d="M891.1 44.5h3.800" stroke="#444" stroke-width="1"/><rect x="898.2" y="37.1" width="5.700" height="5.500" rx="1.100" fill="#fff" stroke="#686868" stroke-width="1"/><path d="M899.2 44.5h3.800" stroke="#444" stroke-width="1"/><rect x="882.2" y="47.1" width="5.700" height="5.500" rx="1.100" fill="#fff" stroke="#686868" stroke-width="1"/><path d="M883.2 54.5h3.800" stroke="#444" stroke-width="1"/><rect x="890.1" y="47.1" width="5.700" height="5.500" rx="1.100" fill="#fff" stroke="#686868" stroke-width="1"/><path d="M891.1 54.5h3.800" stroke="#444" stroke-width="1"/></svg>
<svg class="abs" style="left:0px;top:0px;overflow:visible" width="1024" height="64" viewBox="0 0 1024 64"><path d="M926.300 34v22a1.400 1.400 0 0 0 1.400 1.400h25.600a1.400 1.400 0 0 0 1.400-1.400v-22z" fill="#fff" stroke="#5c5c5c" stroke-width="1"/><rect x="925.800" y="30.100" width="29.400" height="4.900" fill="#3aa671"/><path d="M930 39.6h1.300M933 39.6h6.200M941 39.6h3.100M945.800 39.6h5.700" stroke="#2e2e2e" stroke-width="1.050"/><path d="M930 41.57h1.300M933 41.57h6.200M941 41.57h3.100M945.800 41.57h5.700" stroke="#2e2e2e" stroke-width="1.050"/><path d="M930 43.54h1.300M933 43.54h6.200M941 43.54h3.100M945.800 43.54h5.700" stroke="#2e2e2e" stroke-width="1.050"/><path d="M930 45.51h1.300M933 45.51h6.200M941 45.51h3.100M945.800 45.51h5.700" stroke="#2e2e2e" stroke-width="1.050"/><path d="M930 47.48h1.300M933 47.48h6.200M941 47.48h3.100M945.800 47.48h5.700" stroke="#2e2e2e" stroke-width="1.050"/><path d="M930 49.45h1.300M933 49.45h6.200M941 49.45h3.100M945.800 49.45h5.700" stroke="#2e2e2e" stroke-width="1.050"/><path d="M930 51.42h1.300M933 51.42h6.200M941 51.42h3.100M945.800 51.42h5.700" stroke="#2e2e2e" stroke-width="1.050"/><path d="M930 53.39h1.300M933 53.39h6.200M941 53.39h3.100M945.800 53.39h5.700" stroke="#2e2e2e" stroke-width="1.050"/></svg>
<svg class="abs" style="left:0px;top:0px;overflow:visible" width="1024" height="64" viewBox="0 0 1024 64"><path d="M992.77 34.30 L992.22 28.36 L989.38 28.36 L988.83 34.30 L986.69 34.99 L982.76 30.51 L980.46 32.19 L983.50 37.31 L982.18 39.13 L976.37 37.82 L975.49 40.52 L980.96 42.88 L980.96 45.12 L975.49 47.48 L976.37 50.18 L982.18 48.87 L983.50 50.69 L980.46 55.81 L982.76 57.49 L986.69 53.01 L988.83 53.70 L989.38 59.64 L992.22 59.64 L992.77 53.70 L994.91 53.01 L998.84 57.49 L1001.14 55.81 L998.10 50.69 L999.42 48.87 L1005.23 50.18 L1006.11 47.48 L1000.64 45.12 L1000.64 42.88 L1006.11 40.52 L1005.23 37.82 L999.42 39.13 L998.10 37.31 L1001.14 32.19 L998.84 30.51 L994.91 34.99Z" fill="#636363" stroke="#4a4a4a" stroke-width=".8" stroke-linejoin="round"/><circle cx="990.8" cy="44" r="10.400" fill="#636363"/><circle cx="990.8" cy="44" r="6.100" fill="#f8f8f8" stroke="#4a4a4a" stroke-width=".8"/></svg>
<div class="t" style="left:13.2px;top:10.9px;font-size:12.2px;font-weight:bold;color:#111">iPad</div>
<div class="t" style="left:496.2px;top:11px;font-size:12.9px;font-weight:bold;color:#111">15:40</div>
<div class="t" style="right:42px;top:10.6px;font-size:12px;font-weight:bold;color:#111">85%</div>
<div class="t" style="left:411.6px;top:35.6px;font-size:14.9px;color:#111">Group: All Students</div>
<div class="abs" style="left:0;top:717.5px;width:1024px;height:51px;background:rgba(0,0,0,.045)"></div>
<svg class="abs" style="left:0px;top:0px;overflow:visible" width="64" height="768" viewBox="0 0 64 768"><rect x="-8.6" y="-5.4" width="17.2" height="10.8" rx="3.700" transform="translate(22 744.7) rotate(-45)" fill="none" stroke="#f0ece6" stroke-width="5.200"/><rect x="-8.6" y="-5.4" width="17.2" height="10.8" rx="3.700" transform="translate(22 744.7) rotate(-45)" fill="none" stroke="#2264ae" stroke-width="3.400"/><rect x="-8.6" y="-5.4" width="17.2" height="10.8" rx="3.700" transform="translate(31.2 734.6) rotate(-45)" fill="none" stroke="#f0ece6" stroke-width="5.200"/><rect x="-8.6" y="-5.4" width="17.2" height="10.8" rx="3.700" transform="translate(31.2 734.6) rotate(-45)" fill="none" stroke="#2264ae" stroke-width="3.400"/><clipPath id="lkc"><rect x="-7.500" y="-3.750" width="15" height="7.500" transform="translate(31.200 734.600) rotate(-45)"/></clipPath><g clip-path="url(#lkc)"><rect x="-8.6" y="-5.4" width="17.2" height="10.8" rx="3.700" transform="translate(22 744.7) rotate(-45)" fill="none" stroke="#f0ece6" stroke-width="5.200"/><rect x="-8.6" y="-5.4" width="17.2" height="10.8" rx="3.700" transform="translate(22 744.7) rotate(-45)" fill="none" stroke="#2264ae" stroke-width="3.400"/></g><circle cx="35.900" cy="748.800" r="7.700" fill="#e8f1f5"/><circle cx="35.900" cy="748.800" r="7" fill="#d23a1e"/><path d="M32.800 745.700l6.200 6.200M39 745.700l-6.200 6.200" stroke="#fff" stroke-width="2.200"/></svg>
<svg class="abs" style="left:0px;top:0px;overflow:visible" width="1024" height="768" viewBox="0 0 1024 768"><circle cx="990.8" cy="740.7" r="11.200" fill="none" stroke="#f4f4f4" stroke-width="8.200"/><path d="M-3.700 -6.600L-5 -15.400A15.500 15.500 0 0 1 5 -15.400L3.700 -6.600A7 7 0 0 0 -3.700 -6.600Z" fill="#e98878" transform="translate(990.8 740.7) rotate(0)"/><path d="M-3.700 -6.600L-5 -15.400A15.500 15.500 0 0 1 5 -15.400L3.700 -6.600A7 7 0 0 0 -3.700 -6.600Z" fill="#e98878" transform="translate(990.8 740.7) rotate(90)"/><path d="M-3.700 -6.600L-5 -15.400A15.500 15.500 0 0 1 5 -15.400L3.700 -6.600A7 7 0 0 0 -3.700 -6.600Z" fill="#e98878" transform="translate(990.8 740.7) rotate(180)"/><path d="M-3.700 -6.600L-5 -15.400A15.500 15.500 0 0 1 5 -15.400L3.700 -6.600A7 7 0 0 0 -3.700 -6.600Z" fill="#e98878" transform="translate(990.8 740.7) rotate(270)"/><circle cx="990.8" cy="740.7" r="15.400" fill="none" stroke="#6e6e6e" stroke-width=".9"/><circle cx="990.8" cy="740.7" r="6.900" fill="none" stroke="#6e6e6e" stroke-width=".9"/><path d="M-3.700 -6.600L-5 -15.400A15.500 15.500 0 0 1 5 -15.400L3.700 -6.600A7 7 0 0 0 -3.700 -6.600Z" fill="#e98878" transform="translate(990.8 740.7) rotate(0)"/><path d="M-3.700 -6.600L-5 -15.400A15.500 15.500 0 0 1 5 -15.400L3.700 -6.600A7 7 0 0 0 -3.700 -6.600Z" fill="#e98878" transform="translate(990.8 740.7) rotate(90)"/><path d="M-3.700 -6.600L-5 -15.400A15.500 15.500 0 0 1 5 -15.400L3.700 -6.600A7 7 0 0 0 -3.700 -6.600Z" fill="#e98878" transform="translate(990.8 740.7) rotate(180)"/><path d="M-3.700 -6.600L-5 -15.400A15.500 15.500 0 0 1 5 -15.400L3.700 -6.600A7 7 0 0 0 -3.700 -6.600Z" fill="#e98878" transform="translate(990.8 740.7) rotate(270)"/></svg>
<div class="t" style="left:50.6px;top:736.2px;font-size:17.85px;color:#4a4a4a">Connected to: Miss Neal</div>
<div class="abs" style="left:21px;top:716px;width:3px;height:1.2px;background:#666"></div><div class="abs" style="left:259px;top:716px;width:3px;height:1.2px;background:#777"></div>
<div class="abs" style="left:7px;top:6px;width:1008.5px;height:755.5px;box-shadow:inset 0 0 0 1px rgba(255,255,255,.55);pointer-events:none"></div>
<svg class="abs" style="left:236px;top:59px" width="32" height="14" viewBox="0 0 32 14"><path d="M0 14 C6 14 9 11 12 6.5 C14 3 15 1.2 16 1.2 C17 1.2 18 3 20 6.5 C23 11 26 14 32 14Z" fill="#f7f7f7"/></svg>
<div class="abs" style="left:94px;top:72.3px;width:314.7px;height:220.3px;border-radius:10px;background:#fdfdfd;overflow:hidden">
<div class="abs" style="left:0;top:0;width:100%;height:44.9px;background:#f7f7f7;border-bottom:1px solid #c6c6c8"></div>
<div class="t" style="left:0;width:100%;text-align:center;top:14.5px;font-size:16.65px;font-weight:bold;color:#111">Send Message</div>
<div class="t" style="left:15.6px;top:55.5px;font-size:18.7px;letter-spacing:0.085px;color:#111">5 minutes remaining in the lesson</div>
<div class="abs" style="left:15.2px;right:0;top:85.8px;height:1px;background:#c8c8cc"></div>
<div class="t" style="left:15.0px;top:98.8px;font-size:18.7px;letter-spacing:-0.030px;color:#111">Please save your work now.</div>
<div class="abs" style="left:15.2px;right:0;top:129.2px;height:1px;background:#c8c8cc"></div>
<div class="t" style="left:15.4px;top:142.1px;font-size:18.7px;letter-spacing:0.105px;color:#111">If you need help click the NetSu...</div>
<div class="abs" style="left:15.2px;right:0;top:172.6px;height:1px;background:#c8c8cc"></div>
<div class="t" style="left:15.0px;top:185.4px;font-size:18.7px;letter-spacing:-0.030px;color:#111">Please leave the room immediat...</div>
<div class="abs" style="left:15.2px;right:0;top:215.7px;height:1px;background:#c8c8cc"></div>
</div>
</div></div>
</body></html>
